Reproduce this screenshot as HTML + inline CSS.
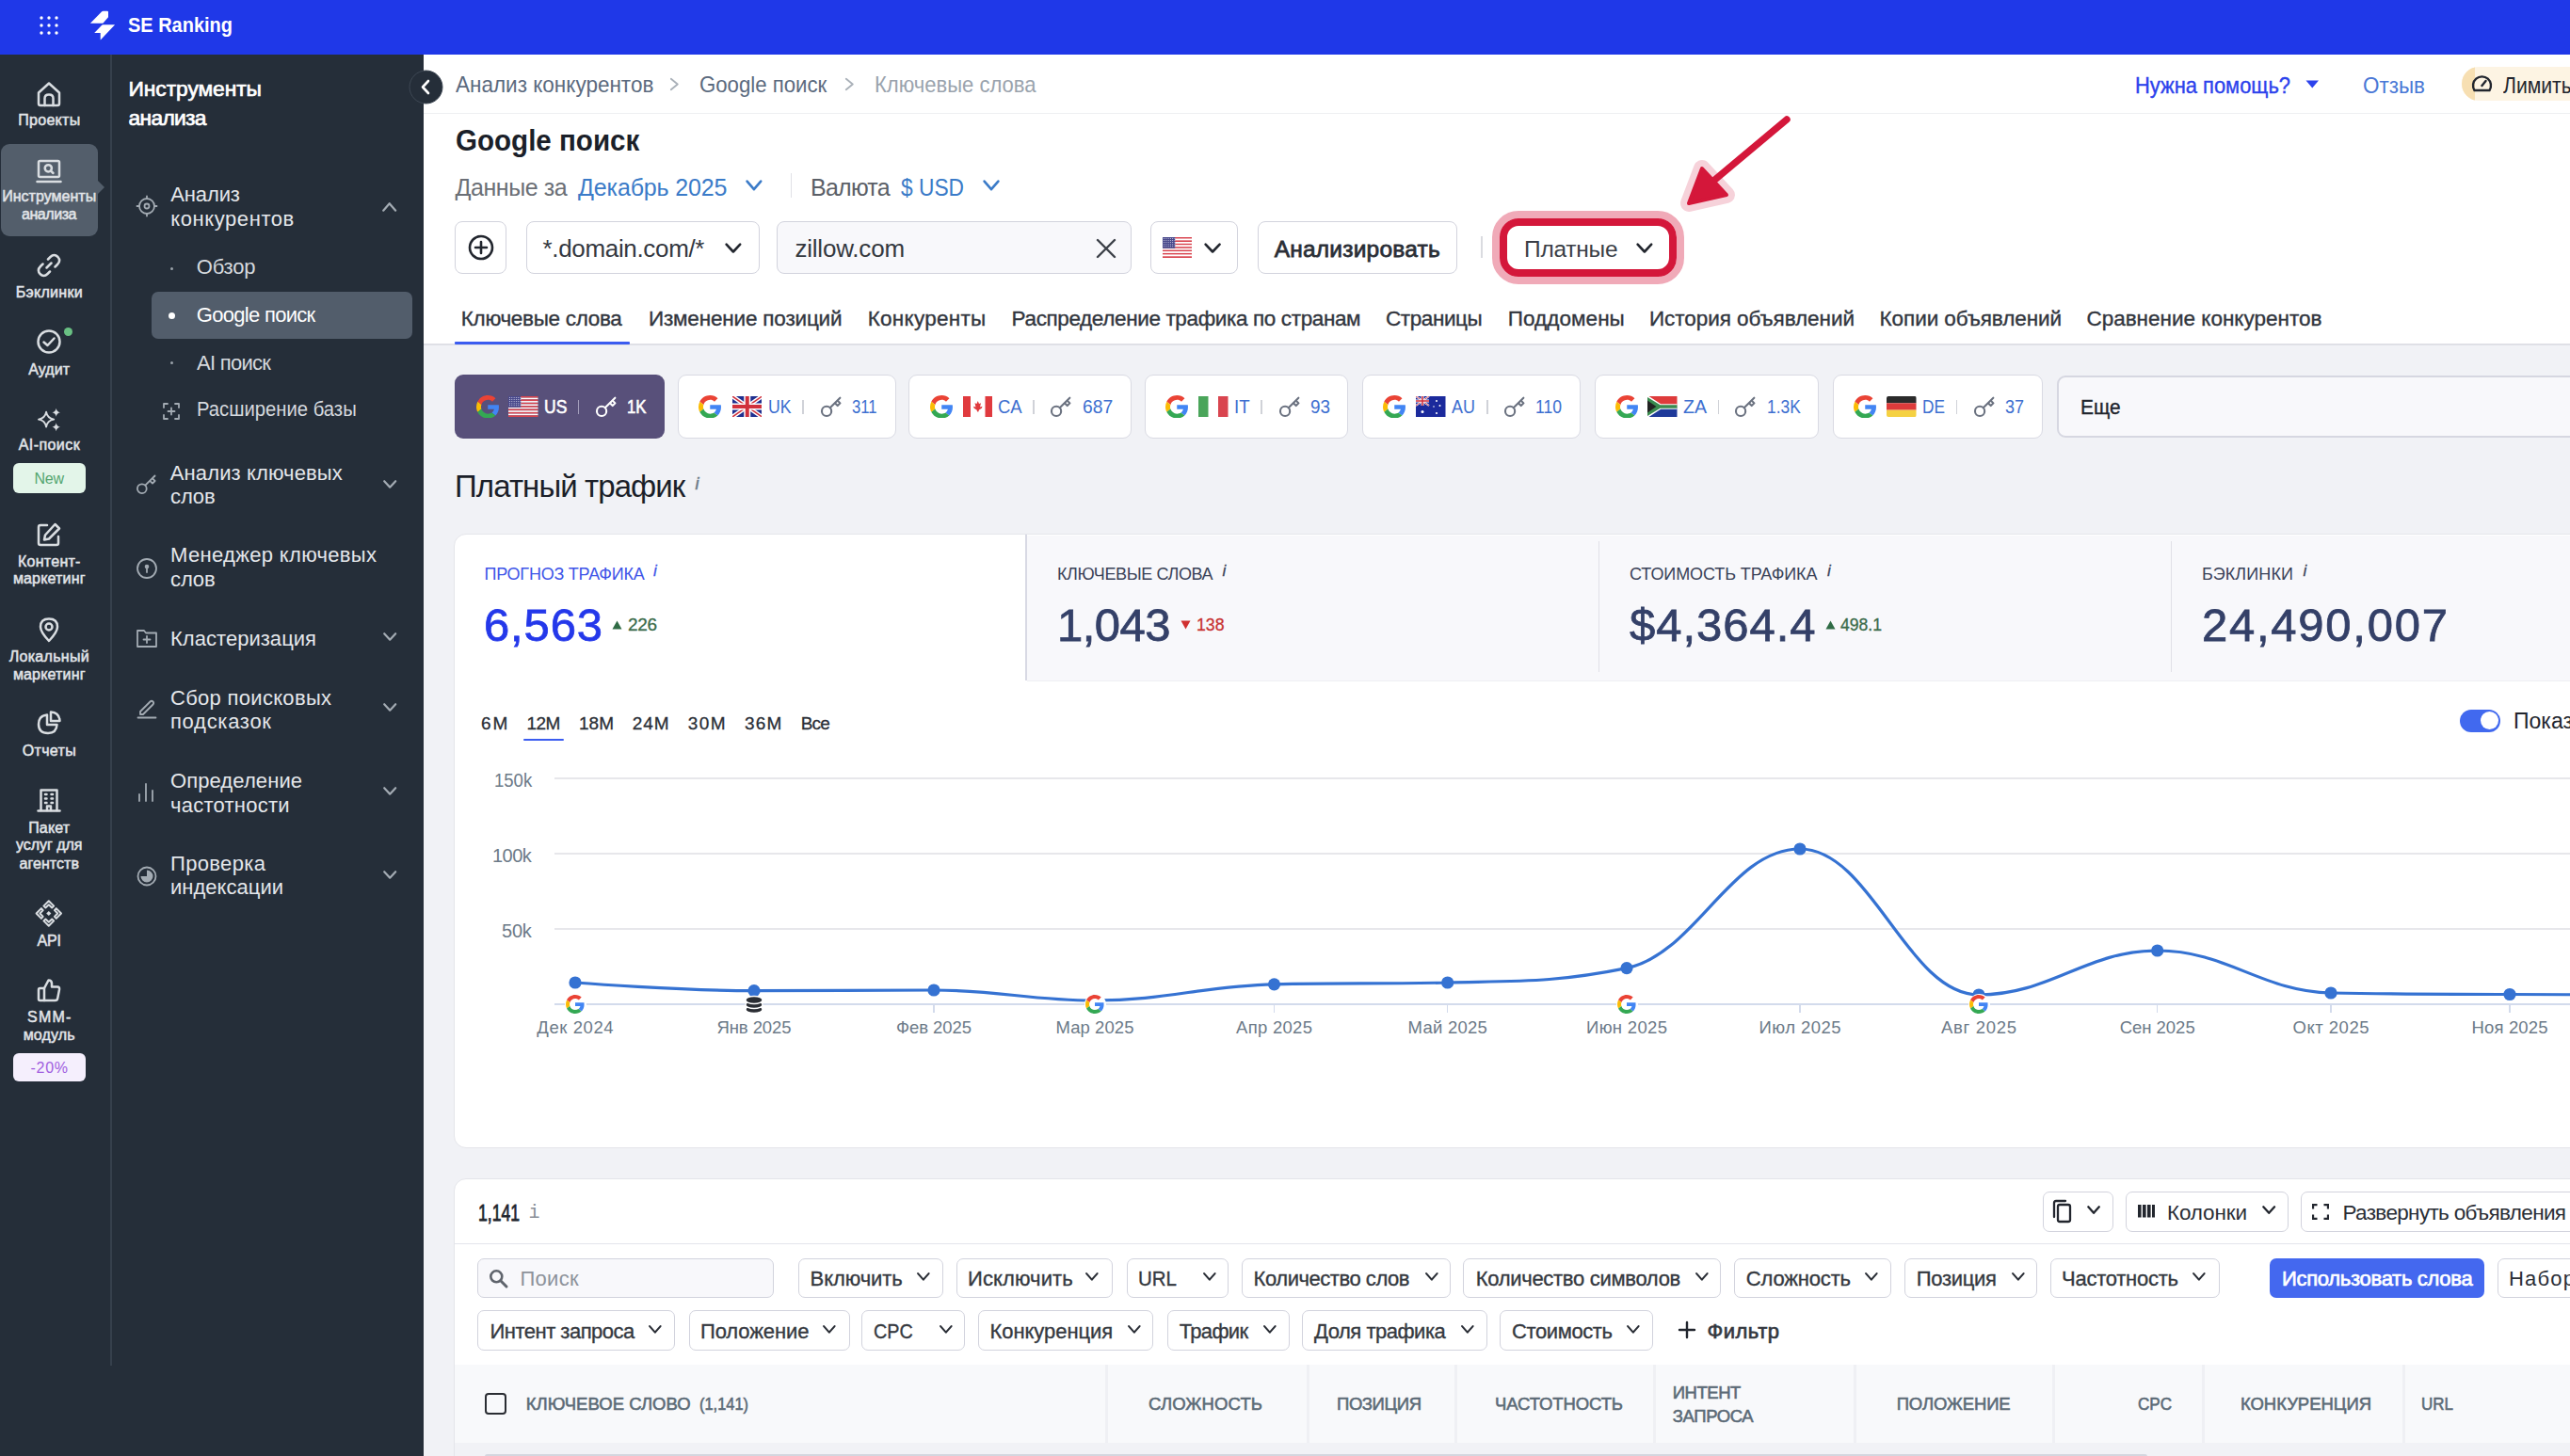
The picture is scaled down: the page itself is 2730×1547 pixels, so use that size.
<!DOCTYPE html>
<html><head><meta charset="utf-8">
<style>
*{box-sizing:border-box;margin:0;padding:0}
html,body{width:2730px;height:1547px;overflow:hidden;background:#f1f2f6;font-family:"Liberation Sans",sans-serif;color:#20242c;position:relative}
.abs{position:absolute}
.t{position:absolute;white-space:pre;line-height:1}

</style></head><body>
<div class="abs" style="left:0.00px;top:0.00px;width:2730.00px;height:58.00px;background:#1f38e8;"></div>
<svg class="abs" style="left:41.00px;top:16.00px;" width="22" height="22" viewBox="0 0 22 22"><circle cx="3" cy="3" r="1.7" fill="#fff"/><circle cx="3" cy="11" r="1.7" fill="#fff"/><circle cx="3" cy="19" r="1.7" fill="#fff"/><circle cx="11" cy="3" r="1.7" fill="#fff"/><circle cx="11" cy="11" r="1.7" fill="#fff"/><circle cx="11" cy="19" r="1.7" fill="#fff"/><circle cx="19" cy="3" r="1.7" fill="#fff"/><circle cx="19" cy="11" r="1.7" fill="#fff"/><circle cx="19" cy="19" r="1.7" fill="#fff"/></svg>
<svg class="abs" style="left:95.00px;top:11.00px;" width="28" height="32" viewBox="0 0 28 32"><path d="M13.2 1.3 Q13.8 0.8 14.6 0.8 H19 Q20 0.8 20 1.8 V7.3 L14.8 13.2 Q14.3 13.8 13.5 13.8 H0.9 Z" fill="#fff"/><path d="M14.2 15.3 H27.1 L11.7 31.4 V24 H5.2 L13.2 15.8 Q13.6 15.3 14.2 15.3 Z" fill="#fff"/></svg>
<div class="t" style="left:136.00px;top:16.25px;font-size:22.5px;color:#ffffff;font-weight:700;transform:scaleX(0.8878);transform-origin:0 0;">SE Ranking</div>
<div class="abs" style="left:0.00px;top:58.00px;width:450.00px;height:1489.00px;background:#252e39;"></div>
<div class="abs" style="left:117.00px;top:58.00px;width:2.00px;height:1393.00px;background:#36404c;"></div>
<div class="abs" style="left:1.00px;top:153.00px;width:103.00px;height:97.50px;background:#535e6b;border-radius:9px;"></div>
<svg class="abs" style="left:103.00px;top:191.00px;" width="9" height="16" viewBox="0 0 9 16"><path d="M0 0 L8 8 L0 16 Z" fill="#535e6b"/></svg>
<svg class="abs" style="left:38.20px;top:85.60px;" width="28" height="28" viewBox="0 0 28 28"><path d="M3 12.5 L14 2.5 L25 12.5 V24 Q25 26 23 26 H5 Q3 26 3 24 Z" fill="none" stroke="#d9dde1" stroke-width="2.5" stroke-linecap="round" stroke-linejoin="round"/><path d="M9.5 26 V18.5 Q9.5 14.5 14 14.5 Q18.5 14.5 18.5 18.5 V26" fill="none" stroke="#d9dde1" stroke-width="2.5" stroke-linecap="round" stroke-linejoin="round"/></svg>
<svg class="abs" style="left:38.20px;top:167.50px;" width="28" height="28" viewBox="0 0 28 28"><rect x="3" y="3" width="22" height="17" rx="1.5" fill="none" stroke="#d9dde1" stroke-width="2.5" stroke-linecap="round" stroke-linejoin="round"/><path d="M1.5 25 H26.5" fill="none" stroke="#d9dde1" stroke-width="2.5" stroke-linecap="round" stroke-linejoin="round"/><circle cx="13.3" cy="10.8" r="3.6" fill="none" stroke="#d9dde1" stroke-width="2.5" stroke-linecap="round" stroke-linejoin="round"/><path d="M16 13.6 L18.5 16" fill="none" stroke="#d9dde1" stroke-width="2.5" stroke-linecap="round" stroke-linejoin="round"/></svg>
<svg class="abs" style="left:38.20px;top:267.50px;" width="28" height="28" viewBox="0 0 28 28"><path d="M11.5 16.5 L16.5 11.5" fill="none" stroke="#d9dde1" stroke-width="2.5" stroke-linecap="round" stroke-linejoin="round"/><path d="M13 7.5 L15.5 5 Q19.5 1 23.5 5 Q27 9 23 13 L20.5 15.5" fill="none" stroke="#d9dde1" stroke-width="2.5" stroke-linecap="round" stroke-linejoin="round"/><path d="M15 20.5 L12.5 23 Q8.5 27 4.5 23 Q1 19 5 15 L7.5 12.5" fill="none" stroke="#d9dde1" stroke-width="2.5" stroke-linecap="round" stroke-linejoin="round"/></svg>
<svg class="abs" style="left:38.20px;top:349.00px;" width="28" height="28" viewBox="0 0 28 28"><circle cx="14" cy="14" r="11.5" fill="none" stroke="#d9dde1" stroke-width="2.5" stroke-linecap="round" stroke-linejoin="round"/><path d="M8.5 14.5 L12.5 18 L19.5 10.5" fill="none" stroke="#d9dde1" stroke-width="2.5" stroke-linecap="round" stroke-linejoin="round"/></svg>
<div class="abs" style="left:67.50px;top:347.50px;width:9.00px;height:9.00px;background:#69c083;border-radius:5px;"></div>
<svg class="abs" style="left:36.00px;top:433.00px;" width="34" height="26" viewBox="0 -4 34 32"><path d="M12.2 1.8 Q13.6 10.2 22.2 11.6 Q13.6 13 12.2 21.4 Q10.8 13 2.2 11.6 Q10.8 10.2 12.2 1.8 Z" fill="none" stroke="#d9dde1" stroke-width="2.3" stroke-linejoin="round"/><path d="M25.2 -3 Q25.9 1.8 30.5 2.5 Q25.9 3.2 25.2 8 Q24.5 3.2 19.9 2.5 Q24.5 1.8 25.2 -3 Z" fill="#d9dde1"/><path d="M25.2 16 Q25.9 20.8 30.5 21.5 Q25.9 22.2 25.2 27 Q24.5 22.2 19.9 21.5 Q24.5 20.8 25.2 16 Z" fill="#d9dde1"/></svg>
<svg class="abs" style="left:38.20px;top:554.00px;" width="28" height="28" viewBox="0 0 28 28"><path d="M12 4 H5 Q3 4 3 6 V23 Q3 25 5 25 H22 Q24 25 24 23 V16" fill="none" stroke="#d9dde1" stroke-width="2.5" stroke-linecap="round" stroke-linejoin="round"/><path d="M20.5 3 L25 7.5 L14 18.5 L9 19.5 L10 14.5 Z" fill="none" stroke="#d9dde1" stroke-width="2.5" stroke-linecap="round" stroke-linejoin="round"/></svg>
<svg class="abs" style="left:38.20px;top:655.00px;" width="28" height="28" viewBox="0 0 28 28"><path d="M14 26 Q5 16.5 5 11 Q5 2.5 14 2.5 Q23 2.5 23 11 Q23 16.5 14 26 Z" fill="none" stroke="#d9dde1" stroke-width="2.5" stroke-linecap="round" stroke-linejoin="round"/><circle cx="14" cy="11" r="3.5" fill="none" stroke="#d9dde1" stroke-width="2.5" stroke-linecap="round" stroke-linejoin="round"/></svg>
<svg class="abs" style="left:38.20px;top:754.00px;" width="28" height="28" viewBox="0 0 28 28"><path d="M12 5.5 Q3 6.5 3 15.5 Q3 25 13 25 Q22 25 22.5 16 H12 Z" fill="none" stroke="#d9dde1" stroke-width="2.5" stroke-linecap="round" stroke-linejoin="round"/><path d="M16 2.5 Q25 3 25.5 12 H16 Z" fill="none" stroke="#d9dde1" stroke-width="2.5" stroke-linecap="round" stroke-linejoin="round"/></svg>
<svg class="abs" style="left:38.20px;top:836.00px;" width="28" height="28" viewBox="0 0 28 28"><path d="M5.5 25 V3.5 H22.5 V25" fill="none" stroke="#d9dde1" stroke-width="2.5" stroke-linecap="round" stroke-linejoin="round"/><path d="M2.5 25.5 H25.5" fill="none" stroke="#d9dde1" stroke-width="2.5" stroke-linecap="round" stroke-linejoin="round"/><path d="M10 8 H11.5 M16.5 8 H18 M10 12.5 H11.5 M16.5 12.5 H18 M10 17 H11.5 M16.5 17 H18" fill="none" stroke="#d9dde1" stroke-width="2.5" stroke-linecap="round" stroke-linejoin="round"/><path d="M12 25 V20.5 H16 V25" fill="none" stroke="#d9dde1" stroke-width="2.5" stroke-linecap="round" stroke-linejoin="round"/></svg>
<svg class="abs" style="left:34.00px;top:952.00px;" width="36" height="36" viewBox="34 952 36 36"><path d="M51.8 957.3 L57.2 962.6 L55.2 964.4 L51.8 961.2 L48.4 964.4 L46.4 962.6 Z M51.8 983.7 L57.2 978.4 L55.2 976.6 L51.8 979.8 L48.4 976.6 L46.4 978.4 Z M38.6 970.5 L43.9 965.1 L45.7 967.1 L42.4 970.5 L45.7 973.9 L43.9 975.9 Z M65.0 970.5 L59.7 965.1 L57.9 967.1 L61.2 970.5 L57.9 973.9 L59.7 975.9 Z" fill="none" stroke="#d9dde1" stroke-width="2" stroke-linejoin="round"/><path d="M51.8 967.9 L54.4 970.5 L51.8 973.1 L49.2 970.5 Z" fill="#d9dde1"/></svg>
<svg class="abs" style="left:38.20px;top:1037.70px;" width="28" height="28" viewBox="0 0 28 28"><path d="M9 12 V25 H4.5 Q3 25 3 23.5 V13.5 Q3 12 4.5 12 Z" fill="none" stroke="#d9dde1" stroke-width="2.5" stroke-linecap="round" stroke-linejoin="round"/><path d="M9 12 L13.5 3.5 Q17 3.5 17 7 V10.5 H23 Q25.5 10.5 25 13.5 L23.2 22.8 Q22.8 25 20.5 25 H9" fill="none" stroke="#d9dde1" stroke-width="2.5" stroke-linecap="round" stroke-linejoin="round"/></svg>
<div class="t" style="left:19.20px;top:119.86px;font-size:16px;color:#e2e5e9;-webkit-text-stroke:0.50px #e2e5e9;letter-spacing:0.299px;">Проекты</div>
<div class="t" style="left:2.20px;top:200.86px;font-size:16px;color:#e2e5e9;-webkit-text-stroke:0.50px #e2e5e9;letter-spacing:0.023px;">Инструменты</div>
<div class="t" style="left:22.95px;top:220.36px;font-size:16px;color:#e2e5e9;-webkit-text-stroke:0.50px #e2e5e9;letter-spacing:-0.440px;">анализа</div>
<div class="t" style="left:16.70px;top:302.86px;font-size:16px;color:#e2e5e9;-webkit-text-stroke:0.50px #e2e5e9;letter-spacing:0.301px;">Бэклинки</div>
<div class="t" style="left:30.20px;top:384.86px;font-size:16px;color:#e2e5e9;-webkit-text-stroke:0.50px #e2e5e9;letter-spacing:0.109px;">Аудит</div>
<div class="t" style="left:19.70px;top:464.86px;font-size:16px;color:#e2e5e9;-webkit-text-stroke:0.50px #e2e5e9;letter-spacing:0.435px;">AI-поиск</div>
<div class="t" style="left:18.95px;top:588.86px;font-size:16px;color:#e2e5e9;-webkit-text-stroke:0.50px #e2e5e9;letter-spacing:0.272px;">Контент-</div>
<div class="t" style="left:13.90px;top:607.36px;font-size:16px;color:#e2e5e9;-webkit-text-stroke:0.50px #e2e5e9;letter-spacing:0.165px;">маркетинг</div>
<div class="t" style="left:9.70px;top:689.86px;font-size:16px;color:#e2e5e9;-webkit-text-stroke:0.50px #e2e5e9;letter-spacing:0.301px;">Локальный</div>
<div class="t" style="left:13.90px;top:708.86px;font-size:16px;color:#e2e5e9;-webkit-text-stroke:0.50px #e2e5e9;letter-spacing:0.165px;">маркетинг</div>
<div class="t" style="left:23.70px;top:789.86px;font-size:16px;color:#e2e5e9;-webkit-text-stroke:0.50px #e2e5e9;letter-spacing:0.338px;">Отчеты</div>
<div class="t" style="left:30.20px;top:871.86px;font-size:16px;color:#e2e5e9;-webkit-text-stroke:0.50px #e2e5e9;letter-spacing:0.180px;">Пакет</div>
<div class="t" style="left:16.95px;top:890.46px;font-size:16px;color:#e2e5e9;-webkit-text-stroke:0.50px #e2e5e9;letter-spacing:-0.035px;">услуг для</div>
<div class="t" style="left:20.50px;top:909.66px;font-size:16px;color:#e2e5e9;-webkit-text-stroke:0.50px #e2e5e9;letter-spacing:0.044px;">агентств</div>
<div class="t" style="left:39.50px;top:991.56px;font-size:16px;color:#e2e5e9;-webkit-text-stroke:0.50px #e2e5e9;letter-spacing:-0.198px;">API</div>
<div class="t" style="left:29.00px;top:1072.86px;font-size:16px;color:#e2e5e9;-webkit-text-stroke:0.50px #e2e5e9;letter-spacing:1.248px;">SMM-</div>
<div class="t" style="left:24.70px;top:1091.86px;font-size:16px;color:#e2e5e9;-webkit-text-stroke:0.50px #e2e5e9;letter-spacing:0.159px;">модуль</div>
<div class="abs" style="left:14.00px;top:492.00px;width:76.60px;height:31.70px;background:#e3f5e9;border-radius:6px;"></div>
<div class="t" style="left:36.55px;top:500.66px;font-size:16px;color:#54a670;letter-spacing:-0.258px;">New</div>
<div class="abs" style="left:14.00px;top:1118.50px;width:76.60px;height:30.90px;background:#f5effd;border-radius:6px;"></div>
<div class="t" style="left:32.55px;top:1126.86px;font-size:16px;color:#a05de0;letter-spacing:0.714px;">-20%</div>
<div class="t" style="left:136.50px;top:82.70px;font-size:22.8px;color:#ffffff;-webkit-text-stroke:0.71px #ffffff;letter-spacing:-0.066px;">Инструменты</div>
<div class="t" style="left:136.50px;top:114.10px;font-size:22.8px;color:#ffffff;-webkit-text-stroke:0.71px #ffffff;letter-spacing:-0.688px;">анализа</div>
<svg class="abs" style="left:144.00px;top:206.50px;" width="24" height="24" viewBox="0 0 24 24"><circle cx="12" cy="12" r="8" fill="none" stroke="#a3abb3" stroke-width="1.8" stroke-linecap="round" stroke-linejoin="round"/><circle cx="12" cy="12" r="2.5" fill="none" stroke="#a3abb3" stroke-width="1.8" stroke-linecap="round" stroke-linejoin="round"/><path d="M12 1.5 V4 M12 20 V22.5 M1.5 12 H4 M20 12 H22.5" fill="none" stroke="#a3abb3" stroke-width="1.8" stroke-linecap="round" stroke-linejoin="round"/></svg>
<div class="t" style="left:181.30px;top:195.78px;font-size:22px;color:#e4e7eb;letter-spacing:-0.136px;">Анализ</div>
<div class="t" style="left:181.30px;top:221.78px;font-size:22px;color:#e4e7eb;letter-spacing:0.573px;">конкурентов</div>
<svg class="abs" style="left:404.80px;top:213.80px;" width="17.4" height="11.9" viewBox="0 0 17.4 11.9"><path d="M2.2 9.7 L8.7 2.2 L15.2 9.7" fill="none" stroke="#a3abb3" stroke-width="2.2" stroke-linecap="round" stroke-linejoin="round"/></svg>
<div class="abs" style="left:180.50px;top:283.50px;width:3.00px;height:3.00px;background:#9aa2aa;border-radius:2px;"></div>
<div class="t" style="left:208.80px;top:272.78px;font-size:22px;color:#d5d9de;letter-spacing:-0.237px;">Обзор</div>
<div class="abs" style="left:161.00px;top:310.40px;width:277.00px;height:49.60px;background:#525d6b;border-radius:7px;"></div>
<div class="abs" style="left:178.50px;top:331.50px;width:7.00px;height:7.00px;background:#ffffff;border-radius:4px;"></div>
<div class="t" style="left:208.80px;top:323.78px;font-size:22px;color:#ffffff;letter-spacing:-0.702px;">Google поиск</div>
<div class="abs" style="left:180.50px;top:383.50px;width:3.00px;height:3.00px;background:#9aa2aa;border-radius:2px;"></div>
<div class="t" style="left:209.00px;top:375.08px;font-size:22px;color:#d5d9de;letter-spacing:-0.710px;">AI поиск</div>
<svg class="abs" style="left:173.00px;top:428.00px;" width="18" height="18" viewBox="0 0 18 18"><path d="M1 5 V1 H5 M13 1 H17 V5 M17 13 V17 H13 M5 17 H1 V13" fill="none" stroke="#a3abb3" stroke-width="1.8" stroke-linecap="round" stroke-linejoin="round"/><path d="M9 5.5 V12.5 M5.5 9 H12.5" fill="none" stroke="#a3abb3" stroke-width="1.8" stroke-linecap="round" stroke-linejoin="round"/></svg>
<div class="t" style="left:209.00px;top:424.48px;font-size:22px;color:#d5d9de;transform:scaleX(0.9205);transform-origin:0 0;">Расширение базы</div>
<svg class="abs" style="left:143.50px;top:502.00px;" width="24" height="24" viewBox="0 0 24 24"><circle cx="6.8" cy="17.2" r="4.9" fill="none" stroke="#a3abb3" stroke-width="1.8"/><path d="M10.3 13.7 L20.5 3.5" fill="none" stroke="#a3abb3" stroke-width="1.8" stroke-linecap="round"/><path d="M15.2 8.8 L18 11.6 L20.6 9 L17.8 6.2" fill="none" stroke="#a3abb3" stroke-width="1.8" stroke-linejoin="round"/></svg>
<div class="t" style="left:180.80px;top:492.48px;font-size:22px;color:#e4e7eb;letter-spacing:0.121px;">Анализ ключевых</div>
<div class="t" style="left:181.00px;top:517.28px;font-size:22px;color:#e4e7eb;letter-spacing:-0.105px;">слов</div>
<svg class="abs" style="left:405.80px;top:508.80px;" width="16.4" height="10.9" viewBox="0 0 16.4 10.9"><path d="M2.2 2.2 L8.2 8.7 L14.2 2.2" fill="none" stroke="#a3abb3" stroke-width="2.2" stroke-linecap="round" stroke-linejoin="round"/></svg>
<svg class="abs" style="left:143.50px;top:591.50px;" width="24" height="24" viewBox="0 0 24 24"><circle cx="12" cy="12" r="10" fill="none" stroke="#a3abb3" stroke-width="1.8" stroke-linecap="round" stroke-linejoin="round"/><circle cx="12" cy="10" r="2.3" fill="#a3abb3"/><path d="M12 11 V16" fill="none" stroke="#a3abb3" stroke-width="1.8" stroke-linecap="round" stroke-linejoin="round"/></svg>
<div class="t" style="left:181.00px;top:578.78px;font-size:22px;color:#e4e7eb;letter-spacing:0.326px;">Менеджер ключевых</div>
<div class="t" style="left:181.00px;top:605.28px;font-size:22px;color:#e4e7eb;letter-spacing:-0.105px;">слов</div>
<svg class="abs" style="left:143.50px;top:666.00px;" width="24" height="24" viewBox="0 0 24 24"><path d="M2 4 H9 L11 6.5 H22 V21 H2 Z" fill="none" stroke="#a3abb3" stroke-width="1.8" stroke-linecap="round" stroke-linejoin="round"/><path d="M12 10 V17 M8.5 13.5 H15.5" fill="none" stroke="#a3abb3" stroke-width="1.8" stroke-linecap="round" stroke-linejoin="round"/></svg>
<div class="t" style="left:181.00px;top:667.78px;font-size:22px;color:#e4e7eb;letter-spacing:0.033px;">Кластеризация</div>
<svg class="abs" style="left:405.80px;top:670.80px;" width="16.4" height="10.9" viewBox="0 0 16.4 10.9"><path d="M2.2 2.2 L8.2 8.7 L14.2 2.2" fill="none" stroke="#a3abb3" stroke-width="2.2" stroke-linecap="round" stroke-linejoin="round"/></svg>
<svg class="abs" style="left:144.00px;top:740.00px;" width="24" height="24" viewBox="0 0 24 24"><path d="M5 16 L15.5 5.5 Q17 4 18.5 5.5 Q20 7 18.5 8.5 L8 19 H5 Z" fill="none" stroke="#a3abb3" stroke-width="1.8" stroke-linecap="round" stroke-linejoin="round"/><path d="M2.5 22.5 H21.5" fill="none" stroke="#a3abb3" stroke-width="1.8" stroke-linecap="round" stroke-linejoin="round"/></svg>
<div class="t" style="left:181.00px;top:731.18px;font-size:22px;color:#e4e7eb;letter-spacing:0.298px;">Сбор поисковых</div>
<div class="t" style="left:181.00px;top:755.78px;font-size:22px;color:#e4e7eb;letter-spacing:0.711px;">подсказок</div>
<svg class="abs" style="left:405.80px;top:745.80px;" width="16.4" height="10.9" viewBox="0 0 16.4 10.9"><path d="M2.2 2.2 L8.2 8.7 L14.2 2.2" fill="none" stroke="#a3abb3" stroke-width="2.2" stroke-linecap="round" stroke-linejoin="round"/></svg>
<svg class="abs" style="left:145.00px;top:829.00px;" width="20" height="24" viewBox="0 0 20 24"><path d="M3 22 V15 M10 22 V4 M17 22 V11" fill="none" stroke="#a3abb3" stroke-width="1.8" stroke-linecap="round" stroke-linejoin="round"/></svg>
<div class="t" style="left:181.00px;top:818.78px;font-size:22px;color:#e4e7eb;letter-spacing:0.089px;">Определение</div>
<div class="t" style="left:181.00px;top:844.58px;font-size:22px;color:#e4e7eb;letter-spacing:0.249px;">частотности</div>
<svg class="abs" style="left:405.80px;top:834.80px;" width="16.4" height="10.9" viewBox="0 0 16.4 10.9"><path d="M2.2 2.2 L8.2 8.7 L14.2 2.2" fill="none" stroke="#a3abb3" stroke-width="2.2" stroke-linecap="round" stroke-linejoin="round"/></svg>
<svg class="abs" style="left:145.00px;top:919.50px;" width="22" height="22" viewBox="0 0 22 22"><circle cx="11" cy="11" r="9.5" fill="none" stroke="#a3abb3" stroke-width="1.8" stroke-linecap="round" stroke-linejoin="round"/><path d="M11 4.5 A6.5 6.5 0 1 1 4.5 11 H11 Z" fill="#a3abb3"/></svg>
<div class="t" style="left:181.00px;top:906.78px;font-size:22px;color:#e4e7eb;letter-spacing:0.350px;">Проверка</div>
<div class="t" style="left:181.00px;top:931.78px;font-size:22px;color:#e4e7eb;letter-spacing:0.023px;">индексации</div>
<svg class="abs" style="left:405.80px;top:923.80px;" width="16.4" height="10.9" viewBox="0 0 16.4 10.9"><path d="M2.2 2.2 L8.2 8.7 L14.2 2.2" fill="none" stroke="#a3abb3" stroke-width="2.2" stroke-linecap="round" stroke-linejoin="round"/></svg>
<div class="abs" style="left:450.00px;top:58.00px;width:2280.00px;height:308.00px;background:#ffffff;"></div>
<div class="abs" style="left:450.00px;top:120.20px;width:2280.00px;height:1.20px;background:#eeeff2;"></div>
<div class="abs" style="left:450.00px;top:364.50px;width:2280.00px;height:2.00px;background:#dfe0e6;"></div>
<svg class="abs" style="left:434.00px;top:74.00px;" width="37" height="37" viewBox="0 0 37 37"><circle cx="18.5" cy="18.5" r="17.5" fill="#252e39" stroke="#3e4854" stroke-width="1"/><path d="M21 12 L15 18.5 L21 25" fill="none" stroke="#fff" stroke-width="2.6" stroke-linecap="round" stroke-linejoin="round"/></svg>
<div class="t" style="left:483.60px;top:78.48px;font-size:24px;color:#5b6a7e;transform:scaleX(0.9378);transform-origin:0 0;">Анализ конкурентов</div>
<svg class="abs" style="left:711.20px;top:82.20px;" width="10.6" height="15.000000000000005" viewBox="0 0 10.6 15.000000000000005"><path d="M1.8 1.8 L8.8 7.500000000000003 L1.8 13.200000000000006" fill="none" stroke="#a9b0b8" stroke-width="1.8" stroke-linecap="round" stroke-linejoin="round"/></svg>
<div class="t" style="left:743.40px;top:78.48px;font-size:24px;color:#5b6a7e;transform:scaleX(0.9247);transform-origin:0 0;">Google поиск</div>
<svg class="abs" style="left:896.60px;top:82.20px;" width="10.6" height="15.000000000000005" viewBox="0 0 10.6 15.000000000000005"><path d="M1.8 1.8 L8.8 7.500000000000003 L1.8 13.200000000000006" fill="none" stroke="#a9b0b8" stroke-width="1.8" stroke-linecap="round" stroke-linejoin="round"/></svg>
<div class="t" style="left:929.00px;top:78.48px;font-size:24px;color:#9aa3ad;transform:scaleX(0.9187);transform-origin:0 0;">Ключевые слова</div>
<div class="t" style="left:2268.00px;top:78.88px;font-size:24px;color:#2c42ec;-webkit-text-stroke:0.38px #2c42ec;transform:scaleX(0.9130);transform-origin:0 0;">Нужна помощь?</div>
<svg class="abs" style="left:2449.00px;top:85.00px;" width="15" height="9" viewBox="0 0 15 9"><path d="M0.5 0.5 H14 L7.25 8.5 Z" fill="#2c42ec"/></svg>
<div class="t" style="left:2510.00px;top:78.88px;font-size:24px;color:#4a78d6;transform:scaleX(0.9339);transform-origin:0 0;">Отзыв</div>
<div class="abs" style="left:2615.00px;top:71.00px;width:145.00px;height:36.00px;background:#fdf4e3;border-radius:18px;"></div>
<svg class="abs" style="left:2615.00px;top:71.00px;" width="14" height="36" viewBox="0 0 14 36"><path d="M18 0 A18 18 0 0 0 18 36 H14 V0 Z" fill="#f7dfb2"/></svg>
<svg class="abs" style="left:2624.00px;top:77.00px;" width="25" height="25" viewBox="0 0 25 25"><path d="M4.5 19 A9.5 9.5 0 1 1 20.5 19 Z" fill="none" stroke="#22262e" stroke-width="2.4" stroke-linejoin="round"/><path d="M12.5 14 L16.5 9" stroke="#22262e" stroke-width="2.4" stroke-linecap="round"/></svg>
<div class="t" style="left:2659.00px;top:78.88px;font-size:24px;color:#22262e;transform:scaleX(0.8819);transform-origin:0 0;">Лимиты</div>
<div class="t" style="left:483.60px;top:134.44px;font-size:31.5px;color:#1b1f29;font-weight:700;transform:scaleX(0.9382);transform-origin:0 0;">Google поиск</div>
<div class="t" style="left:483.60px;top:186.64px;font-size:25px;color:#6b6f76;letter-spacing:-0.455px;">Данные за</div>
<div class="t" style="left:614.00px;top:186.64px;font-size:25px;color:#3b7bc8;letter-spacing:-0.141px;">Декабрь 2025</div>
<svg class="abs" style="left:791.40px;top:190.40px;" width="19.800000000000022" height="13.799999999999994" viewBox="0 0 19.800000000000022 13.799999999999994"><path d="M2.6 2.6 L9.900000000000011 11.199999999999994 L17.200000000000024 2.6" fill="none" stroke="#3b7bc8" stroke-width="2.6" stroke-linecap="round" stroke-linejoin="round"/></svg>
<div class="abs" style="left:839.50px;top:184.40px;width:1.50px;height:25.30px;background:#e0e1e6;"></div>
<div class="t" style="left:861.00px;top:186.64px;font-size:25px;color:#5b5f67;letter-spacing:-0.751px;">Валюта</div>
<div class="t" style="left:957.00px;top:186.64px;font-size:25px;color:#3b7bc8;transform:scaleX(0.9098);transform-origin:0 0;">$ USD</div>
<svg class="abs" style="left:1043.40px;top:190.40px;" width="19.999999999999954" height="13.799999999999994" viewBox="0 0 19.999999999999954 13.799999999999994"><path d="M2.6 2.6 L9.999999999999977 11.199999999999994 L17.399999999999956 2.6" fill="none" stroke="#3b7bc8" stroke-width="2.6" stroke-linecap="round" stroke-linejoin="round"/></svg>
<div class="abs" style="left:483.00px;top:234.60px;width:55.00px;height:56.00px;background:#ffffff;border:1.7px solid #d2d3dd;border-radius:8px;"></div>
<svg class="abs" style="left:497.00px;top:249.00px;" width="28" height="28" viewBox="0 0 28 28"><circle cx="14" cy="14" r="12" fill="none" stroke="#22262e" stroke-width="2.6"/><path d="M14 8 V20 M8 14 H20" stroke="#22262e" stroke-width="2.6" stroke-linecap="round"/></svg>
<div class="abs" style="left:559.00px;top:234.60px;width:247.50px;height:56.00px;background:#ffffff;border:1.7px solid #d2d3dd;border-radius:8px;"></div>
<div class="t" style="left:576.50px;top:250.89px;font-size:26px;color:#34383f;letter-spacing:-0.332px;">*.domain.com/*</div>
<svg class="abs" style="left:769.40px;top:256.80px;" width="19.800000000000022" height="13.100000000000033" viewBox="0 0 19.800000000000022 13.100000000000033"><path d="M2.6 2.6 L9.900000000000011 10.500000000000034 L17.200000000000024 2.6" fill="none" stroke="#22262e" stroke-width="2.6" stroke-linecap="round" stroke-linejoin="round"/></svg>
<div class="abs" style="left:825.40px;top:234.60px;width:377.10px;height:56.00px;background:#f8f8fb;border:1.7px solid #d2d3dd;border-radius:8px;"></div>
<div class="t" style="left:844.40px;top:250.89px;font-size:26px;color:#34383f;letter-spacing:-0.198px;">zillow.com</div>
<svg class="abs" style="left:1163.00px;top:251.50px;" width="24" height="24" viewBox="0 0 24 24"><path d="M3 3 L21 21 M21 3 L3 21" stroke="#3c4048" stroke-width="2.4" stroke-linecap="round"/></svg>
<div class="abs" style="left:1222.00px;top:234.60px;width:93.00px;height:56.00px;background:#ffffff;border:1.7px solid #d2d3dd;border-radius:8px;"></div>
<svg class="abs" style="left:1234.50px;top:251.70px;" width="31.5" height="22" viewBox="0 0 31.5 22"><rect x="0" y="0.000" width="31.5" height="1.692" fill="#d9444f"/><rect x="0" y="1.692" width="31.5" height="1.692" fill="#ffffff"/><rect x="0" y="3.385" width="31.5" height="1.692" fill="#d9444f"/><rect x="0" y="5.077" width="31.5" height="1.692" fill="#ffffff"/><rect x="0" y="6.769" width="31.5" height="1.692" fill="#d9444f"/><rect x="0" y="8.462" width="31.5" height="1.692" fill="#ffffff"/><rect x="0" y="10.154" width="31.5" height="1.692" fill="#d9444f"/><rect x="0" y="11.846" width="31.5" height="1.692" fill="#ffffff"/><rect x="0" y="13.538" width="31.5" height="1.692" fill="#d9444f"/><rect x="0" y="15.231" width="31.5" height="1.692" fill="#ffffff"/><rect x="0" y="16.923" width="31.5" height="1.692" fill="#d9444f"/><rect x="0" y="18.615" width="31.5" height="1.692" fill="#ffffff"/><rect x="0" y="20.308" width="31.5" height="1.692" fill="#d9444f"/><rect x="0" y="0" width="13.23" height="11.85" fill="#4a4a8c"/><circle cx="1.50" cy="1.40" r="0.5" fill="#dde"/><circle cx="1.50" cy="3.50" r="0.5" fill="#dde"/><circle cx="1.50" cy="5.60" r="0.5" fill="#dde"/><circle cx="1.50" cy="7.70" r="0.5" fill="#dde"/><circle cx="1.50" cy="9.80" r="0.5" fill="#dde"/><circle cx="3.80" cy="1.40" r="0.5" fill="#dde"/><circle cx="3.80" cy="3.50" r="0.5" fill="#dde"/><circle cx="3.80" cy="5.60" r="0.5" fill="#dde"/><circle cx="3.80" cy="7.70" r="0.5" fill="#dde"/><circle cx="3.80" cy="9.80" r="0.5" fill="#dde"/><circle cx="6.10" cy="1.40" r="0.5" fill="#dde"/><circle cx="6.10" cy="3.50" r="0.5" fill="#dde"/><circle cx="6.10" cy="5.60" r="0.5" fill="#dde"/><circle cx="6.10" cy="7.70" r="0.5" fill="#dde"/><circle cx="6.10" cy="9.80" r="0.5" fill="#dde"/><circle cx="8.40" cy="1.40" r="0.5" fill="#dde"/><circle cx="8.40" cy="3.50" r="0.5" fill="#dde"/><circle cx="8.40" cy="5.60" r="0.5" fill="#dde"/><circle cx="8.40" cy="7.70" r="0.5" fill="#dde"/><circle cx="8.40" cy="9.80" r="0.5" fill="#dde"/><circle cx="10.70" cy="1.40" r="0.5" fill="#dde"/><circle cx="10.70" cy="3.50" r="0.5" fill="#dde"/><circle cx="10.70" cy="5.60" r="0.5" fill="#dde"/><circle cx="10.70" cy="7.70" r="0.5" fill="#dde"/><circle cx="10.70" cy="9.80" r="0.5" fill="#dde"/><circle cx="13.00" cy="1.40" r="0.5" fill="#dde"/><circle cx="13.00" cy="3.50" r="0.5" fill="#dde"/><circle cx="13.00" cy="5.60" r="0.5" fill="#dde"/><circle cx="13.00" cy="7.70" r="0.5" fill="#dde"/><circle cx="13.00" cy="9.80" r="0.5" fill="#dde"/></svg>
<svg class="abs" style="left:1277.90px;top:256.80px;" width="20.2" height="13.100000000000033" viewBox="0 0 20.2 13.100000000000033"><path d="M2.6 2.6 L10.1 10.500000000000034 L17.6 2.6" fill="none" stroke="#22262e" stroke-width="2.6" stroke-linecap="round" stroke-linejoin="round"/></svg>
<div class="abs" style="left:1335.60px;top:234.60px;width:212.00px;height:56.00px;background:#ffffff;border:1.7px solid #d2d3dd;border-radius:8px;"></div>
<div class="t" style="left:1353.70px;top:252.66px;font-size:24.5px;color:#2a2e36;-webkit-text-stroke:0.76px #2a2e36;letter-spacing:0.211px;">Анализировать</div>
<div class="abs" style="left:1573.30px;top:251.00px;width:1.70px;height:23.00px;background:#dadbe0;"></div>
<div class="t" style="left:1619.00px;top:252.66px;font-size:24.5px;color:#3a3e46;letter-spacing:-0.231px;">Платные</div>
<svg class="abs" style="left:1737.40px;top:256.80px;" width="19.79999999999991" height="13.100000000000033" viewBox="0 0 19.79999999999991 13.100000000000033"><path d="M2.6 2.6 L9.899999999999954 10.500000000000034 L17.19999999999991 2.6" fill="none" stroke="#22262e" stroke-width="2.6" stroke-linecap="round" stroke-linejoin="round"/></svg>
<div class="t" style="left:489.80px;top:327.75px;font-size:22.5px;color:#32363e;-webkit-text-stroke:0.36px #32363e;letter-spacing:-0.316px;">Ключевые слова</div>
<div class="t" style="left:688.90px;top:327.75px;font-size:22.5px;color:#32363e;-webkit-text-stroke:0.36px #32363e;letter-spacing:-0.177px;">Изменение позиций</div>
<div class="t" style="left:921.70px;top:327.75px;font-size:22.5px;color:#32363e;-webkit-text-stroke:0.36px #32363e;letter-spacing:0.269px;">Конкуренты</div>
<div class="t" style="left:1074.60px;top:327.75px;font-size:22.5px;color:#32363e;-webkit-text-stroke:0.36px #32363e;letter-spacing:-0.371px;">Распределение трафика по странам</div>
<div class="t" style="left:1472.00px;top:327.75px;font-size:22.5px;color:#32363e;-webkit-text-stroke:0.36px #32363e;letter-spacing:-0.420px;">Страницы</div>
<div class="t" style="left:1601.80px;top:327.75px;font-size:22.5px;color:#32363e;-webkit-text-stroke:0.36px #32363e;letter-spacing:0.057px;">Поддомены</div>
<div class="t" style="left:1752.00px;top:327.75px;font-size:22.5px;color:#32363e;-webkit-text-stroke:0.36px #32363e;letter-spacing:-0.062px;">История объявлений</div>
<div class="t" style="left:1996.60px;top:327.75px;font-size:22.5px;color:#32363e;-webkit-text-stroke:0.36px #32363e;letter-spacing:-0.082px;">Копии объявлений</div>
<div class="t" style="left:2216.40px;top:327.75px;font-size:22.5px;color:#32363e;-webkit-text-stroke:0.36px #32363e;">Сравнение конкурентов</div>
<div class="abs" style="left:483.00px;top:363.00px;width:186.00px;height:3.00px;background:#3b5cf0;border-radius:1px;"></div>
<div class="abs" style="left:482.70px;top:397.70px;width:223.80px;height:68.30px;background:#58507a;border-radius:9px;"></div>
<svg class="abs" style="left:505.80px;top:419.50px;" width="24.5" height="24.5" viewBox="0 0 48 48"><path fill="#EA4335" d="M24 9.5c3.54 0 6.71 1.22 9.21 3.6l6.85-6.85C35.9 2.38 30.47 0 24 0 14.62 0 6.51 5.38 2.56 13.22l7.98 6.19C12.43 13.72 17.74 9.5 24 9.5z"/><path fill="#4285F4" d="M46.98 24.55c0-1.57-.15-3.09-.38-4.55H24v9.02h12.94c-.58 2.96-2.26 5.48-4.78 7.18l7.73 6c4.51-4.18 7.09-10.36 7.09-17.65z"/><path fill="#FBBC05" d="M10.53 28.59c-.48-1.45-.76-2.99-.76-4.59s.27-3.14.76-4.59l-7.98-6.19C.92 16.46 0 20.12 0 24c0 3.88.92 7.54 2.56 10.78l7.97-6.19z"/><path fill="#34A853" d="M24 48c6.48 0 11.93-2.13 15.89-5.81l-7.73-6c-2.15 1.45-4.92 2.3-8.16 2.3-6.26 0-11.57-4.22-13.47-9.91l-7.98 6.19C6.51 42.62 14.62 48 24 48z"/></svg>
<svg class="abs" style="left:540.00px;top:421.00px;" width="31.5" height="22" viewBox="0 0 31.5 22"><rect x="0" y="0.000" width="31.5" height="1.692" fill="#d9444f"/><rect x="0" y="1.692" width="31.5" height="1.692" fill="#ffffff"/><rect x="0" y="3.385" width="31.5" height="1.692" fill="#d9444f"/><rect x="0" y="5.077" width="31.5" height="1.692" fill="#ffffff"/><rect x="0" y="6.769" width="31.5" height="1.692" fill="#d9444f"/><rect x="0" y="8.462" width="31.5" height="1.692" fill="#ffffff"/><rect x="0" y="10.154" width="31.5" height="1.692" fill="#d9444f"/><rect x="0" y="11.846" width="31.5" height="1.692" fill="#ffffff"/><rect x="0" y="13.538" width="31.5" height="1.692" fill="#d9444f"/><rect x="0" y="15.231" width="31.5" height="1.692" fill="#ffffff"/><rect x="0" y="16.923" width="31.5" height="1.692" fill="#d9444f"/><rect x="0" y="18.615" width="31.5" height="1.692" fill="#ffffff"/><rect x="0" y="20.308" width="31.5" height="1.692" fill="#d9444f"/><rect x="0" y="0" width="13.23" height="11.85" fill="#4a4a8c"/><circle cx="1.50" cy="1.40" r="0.5" fill="#dde"/><circle cx="1.50" cy="3.50" r="0.5" fill="#dde"/><circle cx="1.50" cy="5.60" r="0.5" fill="#dde"/><circle cx="1.50" cy="7.70" r="0.5" fill="#dde"/><circle cx="1.50" cy="9.80" r="0.5" fill="#dde"/><circle cx="3.80" cy="1.40" r="0.5" fill="#dde"/><circle cx="3.80" cy="3.50" r="0.5" fill="#dde"/><circle cx="3.80" cy="5.60" r="0.5" fill="#dde"/><circle cx="3.80" cy="7.70" r="0.5" fill="#dde"/><circle cx="3.80" cy="9.80" r="0.5" fill="#dde"/><circle cx="6.10" cy="1.40" r="0.5" fill="#dde"/><circle cx="6.10" cy="3.50" r="0.5" fill="#dde"/><circle cx="6.10" cy="5.60" r="0.5" fill="#dde"/><circle cx="6.10" cy="7.70" r="0.5" fill="#dde"/><circle cx="6.10" cy="9.80" r="0.5" fill="#dde"/><circle cx="8.40" cy="1.40" r="0.5" fill="#dde"/><circle cx="8.40" cy="3.50" r="0.5" fill="#dde"/><circle cx="8.40" cy="5.60" r="0.5" fill="#dde"/><circle cx="8.40" cy="7.70" r="0.5" fill="#dde"/><circle cx="8.40" cy="9.80" r="0.5" fill="#dde"/><circle cx="10.70" cy="1.40" r="0.5" fill="#dde"/><circle cx="10.70" cy="3.50" r="0.5" fill="#dde"/><circle cx="10.70" cy="5.60" r="0.5" fill="#dde"/><circle cx="10.70" cy="7.70" r="0.5" fill="#dde"/><circle cx="10.70" cy="9.80" r="0.5" fill="#dde"/><circle cx="13.00" cy="1.40" r="0.5" fill="#dde"/><circle cx="13.00" cy="3.50" r="0.5" fill="#dde"/><circle cx="13.00" cy="5.60" r="0.5" fill="#dde"/><circle cx="13.00" cy="7.70" r="0.5" fill="#dde"/><circle cx="13.00" cy="9.80" r="0.5" fill="#dde"/></svg>
<div class="t" style="left:578.30px;top:420.72px;font-size:21px;color:#ffffff;-webkit-text-stroke:0.65px #ffffff;transform:scaleX(0.8325);transform-origin:0 0;">US</div>
<div class="abs" style="left:613.95px;top:425.00px;width:1.50px;height:14.50px;background:#a49fbc;"></div>
<svg class="abs" style="left:631.80px;top:419.00px;" width="25" height="25" viewBox="0 0 24 24"><circle cx="6.8" cy="17.2" r="4.9" fill="none" stroke="#ffffff" stroke-width="2"/><path d="M10.3 13.7 L20.5 3.5" fill="none" stroke="#ffffff" stroke-width="2" stroke-linecap="round"/><path d="M15.2 8.8 L18 11.6 L20.6 9 L17.8 6.2" fill="none" stroke="#ffffff" stroke-width="2" stroke-linejoin="round"/></svg>
<div class="t" style="left:666.00px;top:420.72px;font-size:21px;color:#ffffff;-webkit-text-stroke:0.65px #ffffff;transform:scaleX(0.8019);transform-origin:0 0;">1K</div>
<div class="abs" style="left:720.00px;top:397.70px;width:232.00px;height:68.30px;background:#ffffff;border:1.5px solid #d9dae3;border-radius:9px;"></div>
<svg class="abs" style="left:742.30px;top:419.50px;" width="24.5" height="24.5" viewBox="0 0 48 48"><path fill="#EA4335" d="M24 9.5c3.54 0 6.71 1.22 9.21 3.6l6.85-6.85C35.9 2.38 30.47 0 24 0 14.62 0 6.51 5.38 2.56 13.22l7.98 6.19C12.43 13.72 17.74 9.5 24 9.5z"/><path fill="#4285F4" d="M46.98 24.55c0-1.57-.15-3.09-.38-4.55H24v9.02h12.94c-.58 2.96-2.26 5.48-4.78 7.18l7.73 6c4.51-4.18 7.09-10.36 7.09-17.65z"/><path fill="#FBBC05" d="M10.53 28.59c-.48-1.45-.76-2.99-.76-4.59s.27-3.14.76-4.59l-7.98-6.19C.92 16.46 0 20.12 0 24c0 3.88.92 7.54 2.56 10.78l7.97-6.19z"/><path fill="#34A853" d="M24 48c6.48 0 11.93-2.13 15.89-5.81l-7.73-6c-2.15 1.45-4.92 2.3-8.16 2.3-6.26 0-11.57-4.22-13.47-9.91l-7.98 6.19C6.51 42.62 14.62 48 24 48z"/></svg>
<svg class="abs" style="left:777.50px;top:421.00px;" width="31.5" height="22" viewBox="0 0 31.5 22"><rect width="31.5" height="22" fill="#1f2f8f"/><path d="M0 0 L31.5 22 M31.5 0 L0 22" stroke="#fff" stroke-width="4.5"/><path d="M0 0 L31.5 22 M31.5 0 L0 22" stroke="#d0313c" stroke-width="1.5"/><path d="M15.75 0 V22 M0 11.0 H31.5" stroke="#fff" stroke-width="7"/><path d="M15.75 0 V22 M0 11.0 H31.5" stroke="#d0313c" stroke-width="4"/></svg>
<div class="t" style="left:815.80px;top:420.72px;font-size:21px;color:#3d6fd0;transform:scaleX(0.8428);transform-origin:0 0;">UK</div>
<div class="abs" style="left:852.25px;top:425.00px;width:1.50px;height:14.50px;background:#d0d2d8;"></div>
<svg class="abs" style="left:871.40px;top:419.00px;" width="25" height="25" viewBox="0 0 24 24"><circle cx="6.8" cy="17.2" r="4.9" fill="none" stroke="#6b7280" stroke-width="2"/><path d="M10.3 13.7 L20.5 3.5" fill="none" stroke="#6b7280" stroke-width="2" stroke-linecap="round"/><path d="M15.2 8.8 L18 11.6 L20.6 9 L17.8 6.2" fill="none" stroke="#6b7280" stroke-width="2" stroke-linejoin="round"/></svg>
<div class="t" style="left:905.00px;top:420.72px;font-size:21px;color:#3d6fd0;transform:scaleX(0.7944);transform-origin:0 0;">311</div>
<div class="abs" style="left:965.00px;top:397.70px;width:236.50px;height:68.30px;background:#ffffff;border:1.5px solid #d9dae3;border-radius:9px;"></div>
<svg class="abs" style="left:988.00px;top:419.50px;" width="24.5" height="24.5" viewBox="0 0 48 48"><path fill="#EA4335" d="M24 9.5c3.54 0 6.71 1.22 9.21 3.6l6.85-6.85C35.9 2.38 30.47 0 24 0 14.62 0 6.51 5.38 2.56 13.22l7.98 6.19C12.43 13.72 17.74 9.5 24 9.5z"/><path fill="#4285F4" d="M46.98 24.55c0-1.57-.15-3.09-.38-4.55H24v9.02h12.94c-.58 2.96-2.26 5.48-4.78 7.18l7.73 6c4.51-4.18 7.09-10.36 7.09-17.65z"/><path fill="#FBBC05" d="M10.53 28.59c-.48-1.45-.76-2.99-.76-4.59s.27-3.14.76-4.59l-7.98-6.19C.92 16.46 0 20.12 0 24c0 3.88.92 7.54 2.56 10.78l7.97-6.19z"/><path fill="#34A853" d="M24 48c6.48 0 11.93-2.13 15.89-5.81l-7.73-6c-2.15 1.45-4.92 2.3-8.16 2.3-6.26 0-11.57-4.22-13.47-9.91l-7.98 6.19C6.51 42.62 14.62 48 24 48z"/></svg>
<svg class="abs" style="left:1022.50px;top:421.00px;" width="31.5" height="22" viewBox="0 0 31.5 22"><rect width="31.5" height="22" fill="#fff"/><rect width="8" height="22" fill="#e03a3e"/><rect x="23.5" width="8" height="22" fill="#e03a3e"/><path d="M15.75 5 L17 8 L19 7.2 L18 11.5 L20.5 10.8 L19.8 12.8 L17 14.5 L16.3 16.5 H15.2 L14.5 14.5 L11.7 12.8 L11 10.8 L13.5 11.5 L12.5 7.2 L14.5 8 Z" fill="#e03a3e"/></svg>
<div class="t" style="left:1060.00px;top:420.72px;font-size:21px;color:#3d6fd0;transform:scaleX(0.8805);transform-origin:0 0;">CA</div>
<div class="abs" style="left:1097.25px;top:425.00px;width:1.50px;height:14.50px;background:#d0d2d8;"></div>
<svg class="abs" style="left:1115.00px;top:419.00px;" width="25" height="25" viewBox="0 0 24 24"><circle cx="6.8" cy="17.2" r="4.9" fill="none" stroke="#6b7280" stroke-width="2"/><path d="M10.3 13.7 L20.5 3.5" fill="none" stroke="#6b7280" stroke-width="2" stroke-linecap="round"/><path d="M15.2 8.8 L18 11.6 L20.6 9 L17.8 6.2" fill="none" stroke="#6b7280" stroke-width="2" stroke-linejoin="round"/></svg>
<div class="t" style="left:1149.50px;top:420.72px;font-size:21px;color:#3d6fd0;transform:scaleX(0.9159);transform-origin:0 0;">687</div>
<div class="abs" style="left:1215.60px;top:397.70px;width:216.40px;height:68.30px;background:#ffffff;border:1.5px solid #d9dae3;border-radius:9px;"></div>
<svg class="abs" style="left:1238.00px;top:419.50px;" width="24.5" height="24.5" viewBox="0 0 48 48"><path fill="#EA4335" d="M24 9.5c3.54 0 6.71 1.22 9.21 3.6l6.85-6.85C35.9 2.38 30.47 0 24 0 14.62 0 6.51 5.38 2.56 13.22l7.98 6.19C12.43 13.72 17.74 9.5 24 9.5z"/><path fill="#4285F4" d="M46.98 24.55c0-1.57-.15-3.09-.38-4.55H24v9.02h12.94c-.58 2.96-2.26 5.48-4.78 7.18l7.73 6c4.51-4.18 7.09-10.36 7.09-17.65z"/><path fill="#FBBC05" d="M10.53 28.59c-.48-1.45-.76-2.99-.76-4.59s.27-3.14.76-4.59l-7.98-6.19C.92 16.46 0 20.12 0 24c0 3.88.92 7.54 2.56 10.78l7.97-6.19z"/><path fill="#34A853" d="M24 48c6.48 0 11.93-2.13 15.89-5.81l-7.73-6c-2.15 1.45-4.92 2.3-8.16 2.3-6.26 0-11.57-4.22-13.47-9.91l-7.98 6.19C6.51 42.62 14.62 48 24 48z"/></svg>
<svg class="abs" style="left:1273.00px;top:421.00px;" width="31.5" height="22" viewBox="0 0 31.5 22"><rect width="31.5" height="22" fill="#fff"/><rect width="10.5" height="22" fill="#4aa55a"/><rect x="21" width="10.5" height="22" fill="#d9454f"/></svg>
<div class="t" style="left:1311.00px;top:420.72px;font-size:21px;color:#3d6fd0;transform:scaleX(0.8890);transform-origin:0 0;">IT</div>
<div class="abs" style="left:1339.25px;top:425.00px;width:1.50px;height:14.50px;background:#d0d2d8;"></div>
<svg class="abs" style="left:1357.80px;top:419.00px;" width="25" height="25" viewBox="0 0 24 24"><circle cx="6.8" cy="17.2" r="4.9" fill="none" stroke="#6b7280" stroke-width="2"/><path d="M10.3 13.7 L20.5 3.5" fill="none" stroke="#6b7280" stroke-width="2" stroke-linecap="round"/><path d="M15.2 8.8 L18 11.6 L20.6 9 L17.8 6.2" fill="none" stroke="#6b7280" stroke-width="2" stroke-linejoin="round"/></svg>
<div class="t" style="left:1392.00px;top:420.72px;font-size:21px;color:#3d6fd0;transform:scaleX(0.8990);transform-origin:0 0;">93</div>
<div class="abs" style="left:1446.50px;top:397.70px;width:232.50px;height:68.30px;background:#ffffff;border:1.5px solid #d9dae3;border-radius:9px;"></div>
<svg class="abs" style="left:1469.30px;top:419.50px;" width="24.5" height="24.5" viewBox="0 0 48 48"><path fill="#EA4335" d="M24 9.5c3.54 0 6.71 1.22 9.21 3.6l6.85-6.85C35.9 2.38 30.47 0 24 0 14.62 0 6.51 5.38 2.56 13.22l7.98 6.19C12.43 13.72 17.74 9.5 24 9.5z"/><path fill="#4285F4" d="M46.98 24.55c0-1.57-.15-3.09-.38-4.55H24v9.02h12.94c-.58 2.96-2.26 5.48-4.78 7.18l7.73 6c4.51-4.18 7.09-10.36 7.09-17.65z"/><path fill="#FBBC05" d="M10.53 28.59c-.48-1.45-.76-2.99-.76-4.59s.27-3.14.76-4.59l-7.98-6.19C.92 16.46 0 20.12 0 24c0 3.88.92 7.54 2.56 10.78l7.97-6.19z"/><path fill="#34A853" d="M24 48c6.48 0 11.93-2.13 15.89-5.81l-7.73-6c-2.15 1.45-4.92 2.3-8.16 2.3-6.26 0-11.57-4.22-13.47-9.91l-7.98 6.19C6.51 42.62 14.62 48 24 48z"/></svg>
<svg class="abs" style="left:1504.00px;top:421.00px;" width="31.5" height="22" viewBox="0 0 31.5 22"><rect width="31.5" height="22" fill="#1b2a9c"/><path d="M0 0 L14 10 M14 0 L0 10" stroke="#fff" stroke-width="2"/><path d="M0 0 L14 10 M14 0 L0 10" stroke="#d0313c" stroke-width="0.8"/><path d="M7 0 V10 M0 5 H14" stroke="#fff" stroke-width="3"/><path d="M7 0 V10 M0 5 H14" stroke="#d0313c" stroke-width="1.6"/><circle cx="7" cy="16.5" r="1.5" fill="#fff"/><circle cx="22" cy="5" r="1" fill="#fff"/><circle cx="25.5" cy="10" r="1" fill="#fff"/><circle cx="22" cy="18" r="1.1" fill="#fff"/><circle cx="19" cy="11" r="0.8" fill="#fff"/></svg>
<div class="t" style="left:1542.40px;top:420.72px;font-size:21px;color:#3d6fd0;transform:scaleX(0.8531);transform-origin:0 0;">AU</div>
<div class="abs" style="left:1579.05px;top:425.00px;width:1.50px;height:14.50px;background:#d0d2d8;"></div>
<svg class="abs" style="left:1596.50px;top:419.00px;" width="25" height="25" viewBox="0 0 24 24"><circle cx="6.8" cy="17.2" r="4.9" fill="none" stroke="#6b7280" stroke-width="2"/><path d="M10.3 13.7 L20.5 3.5" fill="none" stroke="#6b7280" stroke-width="2" stroke-linecap="round"/><path d="M15.2 8.8 L18 11.6 L20.6 9 L17.8 6.2" fill="none" stroke="#6b7280" stroke-width="2" stroke-linejoin="round"/></svg>
<div class="t" style="left:1631.00px;top:420.72px;font-size:21px;color:#3d6fd0;transform:scaleX(0.8362);transform-origin:0 0;">110</div>
<div class="abs" style="left:1693.70px;top:397.70px;width:238.30px;height:68.30px;background:#ffffff;border:1.5px solid #d9dae3;border-radius:9px;"></div>
<svg class="abs" style="left:1716.00px;top:419.50px;" width="24.5" height="24.5" viewBox="0 0 48 48"><path fill="#EA4335" d="M24 9.5c3.54 0 6.71 1.22 9.21 3.6l6.85-6.85C35.9 2.38 30.47 0 24 0 14.62 0 6.51 5.38 2.56 13.22l7.98 6.19C12.43 13.72 17.74 9.5 24 9.5z"/><path fill="#4285F4" d="M46.98 24.55c0-1.57-.15-3.09-.38-4.55H24v9.02h12.94c-.58 2.96-2.26 5.48-4.78 7.18l7.73 6c4.51-4.18 7.09-10.36 7.09-17.65z"/><path fill="#FBBC05" d="M10.53 28.59c-.48-1.45-.76-2.99-.76-4.59s.27-3.14.76-4.59l-7.98-6.19C.92 16.46 0 20.12 0 24c0 3.88.92 7.54 2.56 10.78l7.97-6.19z"/><path fill="#34A853" d="M24 48c6.48 0 11.93-2.13 15.89-5.81l-7.73-6c-2.15 1.45-4.92 2.3-8.16 2.3-6.26 0-11.57-4.22-13.47-9.91l-7.98 6.19C6.51 42.62 14.62 48 24 48z"/></svg>
<svg class="abs" style="left:1750.00px;top:421.00px;" width="31.5" height="22" viewBox="0 0 31.5 22"><rect width="31.5" height="11.0" fill="#de3b3b"/><rect y="11.0" width="31.5" height="11.0" fill="#1f3a9a"/><path d="M0 0 L13.229999999999999 11.0 L0 22 Z" fill="#fff"/><path d="M0 3 L11.34 11.0 L0 19 Z" fill="#f2c200"/><path d="M0 -1 L14.175 8.2 H31.5 V13.8 H14.175 L0 23 Z" fill="#fff"/><path d="M0 1 L13.545 9.3 H31.5 V12.7 H13.545 L0 21 Z" fill="#3a8a4e"/><path d="M0 4.5 L9.45 11.0 L0 17.5 Z" fill="#222"/></svg>
<div class="t" style="left:1788.00px;top:420.72px;font-size:21px;color:#3d6fd0;transform:scaleX(0.9313);transform-origin:0 0;">ZA</div>
<div class="abs" style="left:1824.95px;top:425.00px;width:1.50px;height:14.50px;background:#d0d2d8;"></div>
<svg class="abs" style="left:1842.40px;top:419.00px;" width="25" height="25" viewBox="0 0 24 24"><circle cx="6.8" cy="17.2" r="4.9" fill="none" stroke="#6b7280" stroke-width="2"/><path d="M10.3 13.7 L20.5 3.5" fill="none" stroke="#6b7280" stroke-width="2" stroke-linecap="round"/><path d="M15.2 8.8 L18 11.6 L20.6 9 L17.8 6.2" fill="none" stroke="#6b7280" stroke-width="2" stroke-linejoin="round"/></svg>
<div class="t" style="left:1877.00px;top:420.72px;font-size:21px;color:#3d6fd0;transform:scaleX(0.8286);transform-origin:0 0;">1.3K</div>
<div class="abs" style="left:1946.50px;top:397.70px;width:223.50px;height:68.30px;background:#ffffff;border:1.5px solid #d9dae3;border-radius:9px;"></div>
<svg class="abs" style="left:1969.00px;top:419.50px;" width="24.5" height="24.5" viewBox="0 0 48 48"><path fill="#EA4335" d="M24 9.5c3.54 0 6.71 1.22 9.21 3.6l6.85-6.85C35.9 2.38 30.47 0 24 0 14.62 0 6.51 5.38 2.56 13.22l7.98 6.19C12.43 13.72 17.74 9.5 24 9.5z"/><path fill="#4285F4" d="M46.98 24.55c0-1.57-.15-3.09-.38-4.55H24v9.02h12.94c-.58 2.96-2.26 5.48-4.78 7.18l7.73 6c4.51-4.18 7.09-10.36 7.09-17.65z"/><path fill="#FBBC05" d="M10.53 28.59c-.48-1.45-.76-2.99-.76-4.59s.27-3.14.76-4.59l-7.98-6.19C.92 16.46 0 20.12 0 24c0 3.88.92 7.54 2.56 10.78l7.97-6.19z"/><path fill="#34A853" d="M24 48c6.48 0 11.93-2.13 15.89-5.81l-7.73-6c-2.15 1.45-4.92 2.3-8.16 2.3-6.26 0-11.57-4.22-13.47-9.91l-7.98 6.19C6.51 42.62 14.62 48 24 48z"/></svg>
<svg class="abs" style="left:2004.00px;top:421.00px;border-radius:2px" width="31.5" height="22" viewBox="0 0 31.5 22"><rect width="31.5" height="7.333" fill="#2b2b2b" /><rect y="7.333" width="31.5" height="7.333" fill="#dd3b3b"/><rect y="14.667" width="31.5" height="7.333" fill="#f5d142"/></svg>
<div class="t" style="left:2042.00px;top:420.72px;font-size:21px;color:#3d6fd0;transform:scaleX(0.8223);transform-origin:0 0;">DE</div>
<div class="abs" style="left:2077.75px;top:425.00px;width:1.50px;height:14.50px;background:#d0d2d8;"></div>
<svg class="abs" style="left:2095.50px;top:419.00px;" width="25" height="25" viewBox="0 0 24 24"><circle cx="6.8" cy="17.2" r="4.9" fill="none" stroke="#6b7280" stroke-width="2"/><path d="M10.3 13.7 L20.5 3.5" fill="none" stroke="#6b7280" stroke-width="2" stroke-linecap="round"/><path d="M15.2 8.8 L18 11.6 L20.6 9 L17.8 6.2" fill="none" stroke="#6b7280" stroke-width="2" stroke-linejoin="round"/></svg>
<div class="t" style="left:2130.00px;top:420.72px;font-size:21px;color:#3d6fd0;transform:scaleX(0.8562);transform-origin:0 0;">37</div>
<div class="abs" style="left:2184.60px;top:398.70px;width:575.40px;height:66.00px;background:#f8f8fb;border:2.5px solid #d6d7e1;border-radius:9px;"></div>
<div class="t" style="left:2209.50px;top:422.05px;font-size:22.5px;color:#20242c;-webkit-text-stroke:0.36px #20242c;transform:scaleX(0.9283);transform-origin:0 0;">Еще</div>
<div class="t" style="left:483.00px;top:500.37px;font-size:33px;color:#1b1f29;letter-spacing:-0.908px;">Платный трафик</div>
<div class="t" style="left:738.60px;top:505.16px;font-size:18px;color:#6c7a88;-webkit-text-stroke:0.56px #6c7a88;font-style:italic;">i</div>
<div class="abs" style="left:481.70px;top:567.30px;width:2298.30px;height:653.20px;background:#ffffff;border:1.3px solid #e4e5ea;border-radius:13px;"></div>
<div class="abs" style="left:1089.00px;top:568.50px;width:1641.00px;height:154.50px;background:#f8f8fb;"></div>
<div class="abs" style="left:1089.00px;top:567.70px;width:2.00px;height:155.00px;background:#d8d9e4;"></div>
<div class="abs" style="left:1091.00px;top:722.50px;width:1639.00px;height:1.50px;background:#eeeff3;"></div>
<div class="abs" style="left:1697.50px;top:575.00px;width:1.50px;height:138.50px;background:#e0e1e7;"></div>
<div class="abs" style="left:2305.50px;top:575.00px;width:1.50px;height:138.50px;background:#e0e1e7;"></div>
<div class="t" style="left:514.50px;top:600.96px;font-size:18px;color:#3e55e8;letter-spacing:-0.229px;">ПРОГНОЗ ТРАФИКА</div>
<div class="t" style="left:694.00px;top:597.61px;font-size:17px;color:#3e55e8;-webkit-text-stroke:0.27px #3e55e8;font-style:italic;">i</div>
<div class="t" style="left:514.00px;top:639.62px;font-size:49px;color:#2438ea;-webkit-text-stroke:0.78px #2438ea;letter-spacing:0.844px;">6,563</div>
<svg class="abs" style="left:650.00px;top:659.00px;" width="11" height="10" viewBox="0 0 11 10"><path d="M5.5 0.5 L10.5 9.5 H0.5 Z" fill="#2f6b45"/></svg>
<div class="t" style="left:667.00px;top:653.52px;font-size:19px;color:#3a6b4a;-webkit-text-stroke:0.30px #3a6b4a;letter-spacing:-0.352px;">226</div>
<div class="t" style="left:1123.00px;top:600.96px;font-size:18px;color:#3a4258;letter-spacing:-0.375px;">КЛЮЧЕВЫЕ СЛОВА</div>
<div class="t" style="left:1298.50px;top:597.61px;font-size:17px;color:#3a4258;-webkit-text-stroke:0.27px #3a4258;font-style:italic;">i</div>
<div class="t" style="left:1123.00px;top:639.62px;font-size:49px;color:#344068;-webkit-text-stroke:0.78px #344068;letter-spacing:-0.556px;">1,043</div>
<svg class="abs" style="left:1254.00px;top:659.00px;" width="11" height="10" viewBox="0 0 11 10"><path d="M0.5 0.5 H10.5 L5.5 9.5 Z" fill="#d03030"/></svg>
<div class="t" style="left:1270.50px;top:653.52px;font-size:19px;color:#c83232;-webkit-text-stroke:0.30px #c83232;transform:scaleX(0.9305);transform-origin:0 0;">138</div>
<div class="t" style="left:1731.00px;top:600.96px;font-size:18px;color:#3a4258;letter-spacing:-0.098px;">СТОИМОСТЬ ТРАФИКА</div>
<div class="t" style="left:1941.00px;top:597.61px;font-size:17px;color:#3a4258;-webkit-text-stroke:0.27px #3a4258;font-style:italic;">i</div>
<div class="t" style="left:1731.00px;top:639.62px;font-size:49px;color:#344068;-webkit-text-stroke:0.78px #344068;letter-spacing:0.964px;">$4,364.4</div>
<svg class="abs" style="left:1938.50px;top:659.00px;" width="11" height="10" viewBox="0 0 11 10"><path d="M5.5 0.5 L10.5 9.5 H0.5 Z" fill="#2f6b45"/></svg>
<div class="t" style="left:1955.30px;top:653.52px;font-size:19px;color:#3a6b4a;-webkit-text-stroke:0.30px #3a6b4a;transform:scaleX(0.9254);transform-origin:0 0;">498.1</div>
<div class="t" style="left:2339.00px;top:600.96px;font-size:18px;color:#3a4258;letter-spacing:0.112px;">БЭКЛИНКИ</div>
<div class="t" style="left:2446.50px;top:597.61px;font-size:17px;color:#3a4258;-webkit-text-stroke:0.27px #3a4258;font-style:italic;">i</div>
<div class="t" style="left:2339.00px;top:639.62px;font-size:49px;color:#344068;-webkit-text-stroke:0.78px #344068;letter-spacing:1.750px;">24,490,007</div>
<div class="t" style="left:511.00px;top:759.02px;font-size:19px;color:#2a2e36;-webkit-text-stroke:0.30px #2a2e36;letter-spacing:1.994px;">6M</div>
<div class="t" style="left:559.60px;top:759.02px;font-size:19px;color:#2a2e36;-webkit-text-stroke:0.30px #2a2e36;letter-spacing:-0.584px;">12M</div>
<div class="t" style="left:615.00px;top:759.02px;font-size:19px;color:#2a2e36;-webkit-text-stroke:0.30px #2a2e36;letter-spacing:0.016px;">18M</div>
<div class="t" style="left:671.70px;top:759.02px;font-size:19px;color:#2a2e36;-webkit-text-stroke:0.30px #2a2e36;letter-spacing:0.966px;">24M</div>
<div class="t" style="left:730.80px;top:759.02px;font-size:19px;color:#2a2e36;-webkit-text-stroke:0.30px #2a2e36;letter-spacing:1.466px;">30M</div>
<div class="t" style="left:791.00px;top:759.02px;font-size:19px;color:#2a2e36;-webkit-text-stroke:0.30px #2a2e36;letter-spacing:1.216px;">36M</div>
<div class="t" style="left:850.70px;top:759.02px;font-size:19px;color:#2a2e36;-webkit-text-stroke:0.30px #2a2e36;letter-spacing:-0.825px;">Все</div>
<div class="abs" style="left:556.00px;top:784.50px;width:43.00px;height:2.50px;background:#3b5cf0;border-radius:1px;"></div>
<div class="abs" style="left:2613.00px;top:753.60px;width:43.00px;height:24.00px;background:#4169ef;border-radius:12px;"></div>
<div class="abs" style="left:2634.50px;top:756.40px;width:19.00px;height:18.40px;background:#ffffff;border-radius:10px;"></div>
<div class="t" style="left:2670.00px;top:755.33px;font-size:23px;color:#22262e;">Показать</div>
<div class="abs" style="left:589.00px;top:825.50px;width:2141.00px;height:2.00px;background:#e7e7eb;"></div>
<div class="abs" style="left:589.00px;top:905.70px;width:2141.00px;height:2.00px;background:#e7e7eb;"></div>
<div class="abs" style="left:589.00px;top:985.90px;width:2141.00px;height:2.00px;background:#e7e7eb;"></div>
<div class="abs" style="left:589.00px;top:1066.00px;width:2141.00px;height:2.00px;background:#d3dbec;"></div>
<div class="t" style="left:524.60px;top:818.67px;font-size:20px;color:#6c7a88;transform:scaleX(0.9268);transform-origin:0 0;">150k</div>
<div class="t" style="left:523.00px;top:898.87px;font-size:20px;color:#6c7a88;letter-spacing:-0.525px;">100k</div>
<div class="t" style="left:533.00px;top:979.07px;font-size:20px;color:#6c7a88;letter-spacing:-0.225px;">50k</div>
<div class="abs" style="left:610.25px;top:1067.00px;width:1.50px;height:9.00px;background:#d3dbec;"></div>
<div class="t" style="left:570.35px;top:1082.54px;font-size:18.5px;color:#6c7a88;letter-spacing:0.583px;">Дек 2024</div>
<div class="abs" style="left:800.25px;top:1067.00px;width:1.50px;height:9.00px;background:#d3dbec;"></div>
<div class="t" style="left:761.40px;top:1082.54px;font-size:18.5px;color:#6c7a88;letter-spacing:-0.072px;">Янв 2025</div>
<div class="abs" style="left:991.25px;top:1067.00px;width:1.50px;height:9.00px;background:#d3dbec;"></div>
<div class="t" style="left:952.00px;top:1082.54px;font-size:18.5px;color:#6c7a88;letter-spacing:-0.069px;">Фев 2025</div>
<div class="abs" style="left:1162.25px;top:1067.00px;width:1.50px;height:9.00px;background:#d3dbec;"></div>
<div class="t" style="left:1121.50px;top:1082.54px;font-size:18.5px;color:#6c7a88;letter-spacing:0.071px;">Мар 2025</div>
<div class="abs" style="left:1352.75px;top:1067.00px;width:1.50px;height:9.00px;background:#d3dbec;"></div>
<div class="t" style="left:1313.00px;top:1082.54px;font-size:18.5px;color:#6c7a88;letter-spacing:0.292px;">Апр 2025</div>
<div class="abs" style="left:1536.95px;top:1067.00px;width:1.50px;height:9.00px;background:#d3dbec;"></div>
<div class="t" style="left:1495.55px;top:1082.54px;font-size:18.5px;color:#6c7a88;letter-spacing:0.250px;">Май 2025</div>
<div class="abs" style="left:1727.25px;top:1067.00px;width:1.50px;height:9.00px;background:#d3dbec;"></div>
<div class="t" style="left:1685.00px;top:1082.54px;font-size:18.5px;color:#6c7a88;letter-spacing:0.330px;">Июн 2025</div>
<div class="abs" style="left:1911.25px;top:1067.00px;width:1.50px;height:9.00px;background:#d3dbec;"></div>
<div class="t" style="left:1868.50px;top:1082.54px;font-size:18.5px;color:#6c7a88;letter-spacing:0.449px;">Июл 2025</div>
<div class="abs" style="left:2101.25px;top:1067.00px;width:1.50px;height:9.00px;background:#d3dbec;"></div>
<div class="t" style="left:2062.00px;top:1082.54px;font-size:18.5px;color:#6c7a88;letter-spacing:0.683px;">Авг 2025</div>
<div class="abs" style="left:2290.95px;top:1067.00px;width:1.50px;height:9.00px;background:#d3dbec;"></div>
<div class="t" style="left:2251.70px;top:1082.54px;font-size:18.5px;color:#6c7a88;letter-spacing:-0.025px;">Сен 2025</div>
<div class="abs" style="left:2475.25px;top:1067.00px;width:1.50px;height:9.00px;background:#d3dbec;"></div>
<div class="t" style="left:2435.50px;top:1082.54px;font-size:18.5px;color:#6c7a88;letter-spacing:0.504px;">Окт 2025</div>
<div class="abs" style="left:2665.25px;top:1067.00px;width:1.50px;height:9.00px;background:#d3dbec;"></div>
<div class="t" style="left:2625.50px;top:1082.54px;font-size:18.5px;color:#6c7a88;letter-spacing:0.147px;">Ноя 2025</div>
<svg class="abs" style="left:0.00px;top:0.00px;overflow:hidden" width="2730" height="1547" viewBox="0 0 2730 1547"><path d="M611 1044 C611.00 1044.00 725.00 1052.70 801 1052.7 C877.40 1052.70 915.60 1052.00 992 1052 C1060.40 1052.00 1094.60 1063.00 1163 1063 C1239.20 1063.00 1277.30 1047.60 1353.5 1045.8 C1427.18 1044.00 1464.02 1045.80 1537.7 1044 C1613.82 1042.20 1651.88 1044.00 1728 1028.6 C1801.60 1013.20 1838.40 902.00 1912 902 C1988.00 902.00 2026.00 1057.00 2102 1057 C2177.88 1057.00 2215.82 1010.00 2291.7 1010 C2365.42 1010.00 2402.28 1053.50 2476 1055 C2552.00 1056.50 2590.00 1056.09 2666 1056.5 C2739.60 1056.89 2850.00 1057.00 2850 1057" fill="none" stroke="#3572d2" stroke-width="3.2"/><circle cx="611" cy="1044" r="6.6" fill="#3572d2"/><circle cx="801" cy="1052.7" r="6.6" fill="#3572d2"/><circle cx="992" cy="1052" r="6.6" fill="#3572d2"/><circle cx="1163" cy="1063" r="6.6" fill="#3572d2"/><circle cx="1353.5" cy="1045.8" r="6.6" fill="#3572d2"/><circle cx="1537.7" cy="1044" r="6.6" fill="#3572d2"/><circle cx="1728" cy="1028.6" r="6.6" fill="#3572d2"/><circle cx="1912" cy="902" r="6.6" fill="#3572d2"/><circle cx="2102" cy="1057" r="6.6" fill="#3572d2"/><circle cx="2291.7" cy="1010" r="6.6" fill="#3572d2"/><circle cx="2476" cy="1055" r="6.6" fill="#3572d2"/><circle cx="2666" cy="1056.5" r="6.6" fill="#3572d2"/><circle cx="2850" cy="1057" r="6.6" fill="#3572d2"/></svg>
<div class="abs" style="left:599.50px;top:1056.00px;width:23.00px;height:23.00px;background:#ffffff;border-radius:12px;"></div>
<svg class="abs" style="left:601.00px;top:1057.00px;" width="20" height="20" viewBox="0 0 48 48"><path fill="#EA4335" d="M24 9.5c3.54 0 6.71 1.22 9.21 3.6l6.85-6.85C35.9 2.38 30.47 0 24 0 14.62 0 6.51 5.38 2.56 13.22l7.98 6.19C12.43 13.72 17.74 9.5 24 9.5z"/><path fill="#4285F4" d="M46.98 24.55c0-1.57-.15-3.09-.38-4.55H24v9.02h12.94c-.58 2.96-2.26 5.48-4.78 7.18l7.73 6c4.51-4.18 7.09-10.36 7.09-17.65z"/><path fill="#FBBC05" d="M10.53 28.59c-.48-1.45-.76-2.99-.76-4.59s.27-3.14.76-4.59l-7.98-6.19C.92 16.46 0 20.12 0 24c0 3.88.92 7.54 2.56 10.78l7.97-6.19z"/><path fill="#34A853" d="M24 48c6.48 0 11.93-2.13 15.89-5.81l-7.73-6c-2.15 1.45-4.92 2.3-8.16 2.3-6.26 0-11.57-4.22-13.47-9.91l-7.98 6.19C6.51 42.62 14.62 48 24 48z"/></svg>
<div class="abs" style="left:1151.50px;top:1056.00px;width:23.00px;height:23.00px;background:#ffffff;border-radius:12px;"></div>
<svg class="abs" style="left:1153.00px;top:1057.00px;" width="20" height="20" viewBox="0 0 48 48"><path fill="#EA4335" d="M24 9.5c3.54 0 6.71 1.22 9.21 3.6l6.85-6.85C35.9 2.38 30.47 0 24 0 14.62 0 6.51 5.38 2.56 13.22l7.98 6.19C12.43 13.72 17.74 9.5 24 9.5z"/><path fill="#4285F4" d="M46.98 24.55c0-1.57-.15-3.09-.38-4.55H24v9.02h12.94c-.58 2.96-2.26 5.48-4.78 7.18l7.73 6c4.51-4.18 7.09-10.36 7.09-17.65z"/><path fill="#FBBC05" d="M10.53 28.59c-.48-1.45-.76-2.99-.76-4.59s.27-3.14.76-4.59l-7.98-6.19C.92 16.46 0 20.12 0 24c0 3.88.92 7.54 2.56 10.78l7.97-6.19z"/><path fill="#34A853" d="M24 48c6.48 0 11.93-2.13 15.89-5.81l-7.73-6c-2.15 1.45-4.92 2.3-8.16 2.3-6.26 0-11.57-4.22-13.47-9.91l-7.98 6.19C6.51 42.62 14.62 48 24 48z"/></svg>
<div class="abs" style="left:1716.50px;top:1056.00px;width:23.00px;height:23.00px;background:#ffffff;border-radius:12px;"></div>
<svg class="abs" style="left:1718.00px;top:1057.00px;" width="20" height="20" viewBox="0 0 48 48"><path fill="#EA4335" d="M24 9.5c3.54 0 6.71 1.22 9.21 3.6l6.85-6.85C35.9 2.38 30.47 0 24 0 14.62 0 6.51 5.38 2.56 13.22l7.98 6.19C12.43 13.72 17.74 9.5 24 9.5z"/><path fill="#4285F4" d="M46.98 24.55c0-1.57-.15-3.09-.38-4.55H24v9.02h12.94c-.58 2.96-2.26 5.48-4.78 7.18l7.73 6c4.51-4.18 7.09-10.36 7.09-17.65z"/><path fill="#FBBC05" d="M10.53 28.59c-.48-1.45-.76-2.99-.76-4.59s.27-3.14.76-4.59l-7.98-6.19C.92 16.46 0 20.12 0 24c0 3.88.92 7.54 2.56 10.78l7.97-6.19z"/><path fill="#34A853" d="M24 48c6.48 0 11.93-2.13 15.89-5.81l-7.73-6c-2.15 1.45-4.92 2.3-8.16 2.3-6.26 0-11.57-4.22-13.47-9.91l-7.98 6.19C6.51 42.62 14.62 48 24 48z"/></svg>
<div class="abs" style="left:2090.50px;top:1056.00px;width:23.00px;height:23.00px;background:#ffffff;border-radius:12px;"></div>
<svg class="abs" style="left:2092.00px;top:1057.00px;" width="20" height="20" viewBox="0 0 48 48"><path fill="#EA4335" d="M24 9.5c3.54 0 6.71 1.22 9.21 3.6l6.85-6.85C35.9 2.38 30.47 0 24 0 14.62 0 6.51 5.38 2.56 13.22l7.98 6.19C12.43 13.72 17.74 9.5 24 9.5z"/><path fill="#4285F4" d="M46.98 24.55c0-1.57-.15-3.09-.38-4.55H24v9.02h12.94c-.58 2.96-2.26 5.48-4.78 7.18l7.73 6c4.51-4.18 7.09-10.36 7.09-17.65z"/><path fill="#FBBC05" d="M10.53 28.59c-.48-1.45-.76-2.99-.76-4.59s.27-3.14.76-4.59l-7.98-6.19C.92 16.46 0 20.12 0 24c0 3.88.92 7.54 2.56 10.78l7.97-6.19z"/><path fill="#34A853" d="M24 48c6.48 0 11.93-2.13 15.89-5.81l-7.73-6c-2.15 1.45-4.92 2.3-8.16 2.3-6.26 0-11.57-4.22-13.47-9.91l-7.98 6.19C6.51 42.62 14.62 48 24 48z"/></svg>
<svg class="abs" style="left:789.00px;top:1055.00px;" width="24" height="24" viewBox="0 0 24 24"><g fill="#2a2d33" stroke="#ffffff" stroke-width="1.4"><ellipse cx="12" cy="17.5" rx="9" ry="4"/><ellipse cx="12" cy="12.5" rx="9" ry="4"/><ellipse cx="12" cy="7.5" rx="9" ry="4"/></g></svg>
<div class="abs" style="left:481.70px;top:1251.60px;width:2298.30px;height:348.40px;background:#ffffff;border:1.3px solid #e4e5ea;border-radius:13px;"></div>
<div class="abs" style="left:483.00px;top:1321.20px;width:2247.00px;height:1.30px;background:#e3e4eb;"></div>
<div class="t" style="left:508.30px;top:1277.09px;font-size:24.7px;color:#20242c;-webkit-text-stroke:0.77px #20242c;transform:scaleX(0.7122);transform-origin:0 0;">1,141</div>
<div class="t" style="left:561.50px;top:1278.67px;font-size:20px;color:#8a9098;font-family:'Liberation Mono';">i</div>
<div class="abs" style="left:2170.00px;top:1265.50px;width:74.60px;height:43.00px;background:#ffffff;border:1.5px solid #d2d3dd;border-radius:7px;"></div>
<svg class="abs" style="left:2179.00px;top:1273.00px;" width="26" height="28" viewBox="0 0 26 28"><rect x="7" y="7" width="13" height="18" rx="2" fill="none" stroke="#22262e" stroke-width="2.3"/><path d="M3 20 V5 Q3 3 5 3 H15" fill="none" stroke="#22262e" stroke-width="2.3" stroke-linecap="round"/></svg>
<svg class="abs" style="left:2215.70px;top:1279.70px;" width="16.1" height="11.1" viewBox="0 0 16.1 11.1"><path d="M2.3 2.3 L8.05 8.8 L13.8 2.3" fill="none" stroke="#22262e" stroke-width="2.3" stroke-linecap="round" stroke-linejoin="round"/></svg>
<div class="abs" style="left:2257.60px;top:1265.50px;width:173.70px;height:43.00px;background:#ffffff;border:1.5px solid #d2d3dd;border-radius:7px;"></div>
<svg class="abs" style="left:2270.50px;top:1280.00px;" width="18.5" height="13.5" viewBox="0 0 18.5 13.5"><rect x="0" y="0" width="3.6" height="13.5" fill="#22262e"/><rect x="5" y="0" width="3.6" height="13.5" fill="#22262e"/><rect x="10" y="0" width="3.6" height="13.5" fill="#22262e"/><rect x="15" y="0" width="3.5" height="13.5" fill="#22262e"/></svg>
<div class="t" style="left:2302.00px;top:1277.55px;font-size:22.5px;color:#2a2e36;letter-spacing:-0.143px;">Колонки</div>
<svg class="abs" style="left:2401.70px;top:1279.70px;" width="16.400000000000183" height="11.1" viewBox="0 0 16.400000000000183 11.1"><path d="M2.3 2.3 L8.200000000000092 8.8 L14.100000000000183 2.3" fill="none" stroke="#22262e" stroke-width="2.3" stroke-linecap="round" stroke-linejoin="round"/></svg>
<div class="abs" style="left:2444.00px;top:1265.50px;width:336.00px;height:43.00px;background:#ffffff;border:1.5px solid #d2d3dd;border-radius:7px;"></div>
<svg class="abs" style="left:2456.00px;top:1279.00px;" width="18" height="17" viewBox="0 0 18 17"><path d="M1 5.5 V1 H5.5 M12.5 1 H17 V5.5 M17 11.5 V16 H12.5 M5.5 16 H1 V11.5" fill="none" stroke="#22262e" stroke-width="2.3"/></svg>
<div class="t" style="left:2488.50px;top:1277.55px;font-size:22.5px;color:#2a2e36;letter-spacing:-0.659px;">Развернуть объявления</div>
<div class="abs" style="left:507.30px;top:1336.50px;width:314.30px;height:42.00px;background:#f8f8fb;border:1.5px solid #d2d3dd;border-radius:7px;"></div>
<svg class="abs" style="left:519.00px;top:1348.00px;" width="22" height="22" viewBox="0 0 22 22"><circle cx="8.3" cy="8.3" r="6" fill="none" stroke="#5f646c" stroke-width="2.6"/><path d="M12.8 12.8 L19 19" stroke="#5f646c" stroke-width="3" stroke-linecap="round"/></svg>
<div class="t" style="left:552.40px;top:1348.18px;font-size:22px;color:#8d929a;letter-spacing:0.308px;">Поиск</div>
<div class="abs" style="left:848.40px;top:1336.50px;width:153.40px;height:42.00px;background:#ffffff;border:1.5px solid #d2d3dd;border-radius:7px;"></div>
<div class="t" style="left:860.60px;top:1348.08px;font-size:22px;color:#353940;-webkit-text-stroke:0.35px #353940;letter-spacing:-0.086px;">Включить</div>
<svg class="abs" style="left:972.90px;top:1351.40px;" width="15.7" height="10.7" viewBox="0 0 15.7 10.7"><path d="M2.1 2.1 L7.85 8.6 L13.6 2.1" fill="none" stroke="#2a2e36" stroke-width="2.1" stroke-linecap="round" stroke-linejoin="round"/></svg>
<div class="abs" style="left:1015.60px;top:1336.50px;width:166.40px;height:42.00px;background:#ffffff;border:1.5px solid #d2d3dd;border-radius:7px;"></div>
<div class="t" style="left:1028.00px;top:1348.08px;font-size:22px;color:#353940;-webkit-text-stroke:0.35px #353940;letter-spacing:0.109px;">Исключить</div>
<svg class="abs" style="left:1152.30px;top:1351.40px;" width="15.7" height="10.7" viewBox="0 0 15.7 10.7"><path d="M2.1 2.1 L7.85 8.6 L13.6 2.1" fill="none" stroke="#2a2e36" stroke-width="2.1" stroke-linecap="round" stroke-linejoin="round"/></svg>
<div class="abs" style="left:1196.60px;top:1336.50px;width:108.40px;height:42.00px;background:#ffffff;border:1.5px solid #d2d3dd;border-radius:7px;"></div>
<div class="t" style="left:1208.70px;top:1348.08px;font-size:22px;color:#353940;-webkit-text-stroke:0.35px #353940;transform:scaleX(0.9292);transform-origin:0 0;">URL</div>
<svg class="abs" style="left:1276.90px;top:1351.40px;" width="15.7" height="10.7" viewBox="0 0 15.7 10.7"><path d="M2.1 2.1 L7.85 8.6 L13.6 2.1" fill="none" stroke="#2a2e36" stroke-width="2.1" stroke-linecap="round" stroke-linejoin="round"/></svg>
<div class="abs" style="left:1318.80px;top:1336.50px;width:222.70px;height:42.00px;background:#ffffff;border:1.5px solid #d2d3dd;border-radius:7px;"></div>
<div class="t" style="left:1331.60px;top:1348.08px;font-size:22px;color:#353940;-webkit-text-stroke:0.35px #353940;letter-spacing:-0.455px;">Количество слов</div>
<svg class="abs" style="left:1512.90px;top:1351.40px;" width="15.7" height="10.7" viewBox="0 0 15.7 10.7"><path d="M2.1 2.1 L7.85 8.6 L13.6 2.1" fill="none" stroke="#2a2e36" stroke-width="2.1" stroke-linecap="round" stroke-linejoin="round"/></svg>
<div class="abs" style="left:1554.00px;top:1336.50px;width:274.00px;height:42.00px;background:#ffffff;border:1.5px solid #d2d3dd;border-radius:7px;"></div>
<div class="t" style="left:1567.70px;top:1348.08px;font-size:22px;color:#353940;-webkit-text-stroke:0.35px #353940;letter-spacing:-0.293px;">Количество символов</div>
<svg class="abs" style="left:1799.90px;top:1351.40px;" width="15.7" height="10.7" viewBox="0 0 15.7 10.7"><path d="M2.1 2.1 L7.85 8.6 L13.6 2.1" fill="none" stroke="#2a2e36" stroke-width="2.1" stroke-linecap="round" stroke-linejoin="round"/></svg>
<div class="abs" style="left:1842.00px;top:1336.50px;width:167.00px;height:42.00px;background:#ffffff;border:1.5px solid #d2d3dd;border-radius:7px;"></div>
<div class="t" style="left:1854.80px;top:1348.08px;font-size:22px;color:#353940;-webkit-text-stroke:0.35px #353940;letter-spacing:-0.176px;">Сложность</div>
<svg class="abs" style="left:1980.30px;top:1351.40px;" width="15.7" height="10.7" viewBox="0 0 15.7 10.7"><path d="M2.1 2.1 L7.85 8.6 L13.6 2.1" fill="none" stroke="#2a2e36" stroke-width="2.1" stroke-linecap="round" stroke-linejoin="round"/></svg>
<div class="abs" style="left:2023.00px;top:1336.50px;width:141.00px;height:42.00px;background:#ffffff;border:1.5px solid #d2d3dd;border-radius:7px;"></div>
<div class="t" style="left:2035.70px;top:1348.08px;font-size:22px;color:#353940;-webkit-text-stroke:0.35px #353940;letter-spacing:-0.281px;">Позиция</div>
<svg class="abs" style="left:2136.30px;top:1351.40px;" width="15.7" height="10.7" viewBox="0 0 15.7 10.7"><path d="M2.1 2.1 L7.85 8.6 L13.6 2.1" fill="none" stroke="#2a2e36" stroke-width="2.1" stroke-linecap="round" stroke-linejoin="round"/></svg>
<div class="abs" style="left:2178.40px;top:1336.50px;width:179.30px;height:42.00px;background:#ffffff;border:1.5px solid #d2d3dd;border-radius:7px;"></div>
<div class="t" style="left:2190.00px;top:1348.08px;font-size:22px;color:#353940;-webkit-text-stroke:0.35px #353940;letter-spacing:-0.248px;">Частотность</div>
<svg class="abs" style="left:2327.90px;top:1351.40px;" width="15.7" height="10.7" viewBox="0 0 15.7 10.7"><path d="M2.1 2.1 L7.85 8.6 L13.6 2.1" fill="none" stroke="#2a2e36" stroke-width="2.1" stroke-linecap="round" stroke-linejoin="round"/></svg>
<div class="abs" style="left:2411.00px;top:1336.50px;width:228.00px;height:42.00px;background:#4468ef;border-radius:7px;"></div>
<div class="t" style="left:2424.00px;top:1348.18px;font-size:22px;color:#ffffff;-webkit-text-stroke:0.68px #ffffff;letter-spacing:-0.294px;">Использовать слова</div>
<div class="abs" style="left:2652.60px;top:1336.50px;width:127.40px;height:42.00px;background:#ffffff;border:1.5px solid #d2d3dd;border-radius:7px;"></div>
<div class="t" style="left:2664.90px;top:1348.18px;font-size:22px;color:#2a2e36;letter-spacing:1.199px;">Набор</div>
<div class="abs" style="left:507.30px;top:1392.30px;width:210.20px;height:42.90px;background:#ffffff;border:1.5px solid #d2d3dd;border-radius:7px;"></div>
<div class="t" style="left:520.50px;top:1403.88px;font-size:22px;color:#353940;-webkit-text-stroke:0.35px #353940;letter-spacing:-0.501px;">Интент запроса</div>
<svg class="abs" style="left:688.30px;top:1407.20px;" width="15.7" height="10.7" viewBox="0 0 15.7 10.7"><path d="M2.1 2.1 L7.85 8.6 L13.6 2.1" fill="none" stroke="#2a2e36" stroke-width="2.1" stroke-linecap="round" stroke-linejoin="round"/></svg>
<div class="abs" style="left:731.50px;top:1392.30px;width:171.50px;height:42.90px;background:#ffffff;border:1.5px solid #d2d3dd;border-radius:7px;"></div>
<div class="t" style="left:744.00px;top:1403.88px;font-size:22px;color:#353940;-webkit-text-stroke:0.35px #353940;letter-spacing:-0.096px;">Положение</div>
<svg class="abs" style="left:872.90px;top:1407.20px;" width="15.7" height="10.7" viewBox="0 0 15.7 10.7"><path d="M2.1 2.1 L7.85 8.6 L13.6 2.1" fill="none" stroke="#2a2e36" stroke-width="2.1" stroke-linecap="round" stroke-linejoin="round"/></svg>
<div class="abs" style="left:915.00px;top:1392.30px;width:110.00px;height:42.90px;background:#ffffff;border:1.5px solid #d2d3dd;border-radius:7px;"></div>
<div class="t" style="left:928.20px;top:1403.88px;font-size:22px;color:#353940;-webkit-text-stroke:0.35px #353940;transform:scaleX(0.8998);transform-origin:0 0;">CPC</div>
<svg class="abs" style="left:996.50px;top:1407.20px;" width="15.7" height="10.7" viewBox="0 0 15.7 10.7"><path d="M2.1 2.1 L7.85 8.6 L13.6 2.1" fill="none" stroke="#2a2e36" stroke-width="2.1" stroke-linecap="round" stroke-linejoin="round"/></svg>
<div class="abs" style="left:1039.00px;top:1392.30px;width:186.00px;height:42.90px;background:#ffffff;border:1.5px solid #d2d3dd;border-radius:7px;"></div>
<div class="t" style="left:1051.50px;top:1403.88px;font-size:22px;color:#353940;-webkit-text-stroke:0.35px #353940;letter-spacing:-0.055px;">Конкуренция</div>
<svg class="abs" style="left:1196.90px;top:1407.20px;" width="15.7" height="10.7" viewBox="0 0 15.7 10.7"><path d="M2.1 2.1 L7.85 8.6 L13.6 2.1" fill="none" stroke="#2a2e36" stroke-width="2.1" stroke-linecap="round" stroke-linejoin="round"/></svg>
<div class="abs" style="left:1239.70px;top:1392.30px;width:130.80px;height:42.90px;background:#ffffff;border:1.5px solid #d2d3dd;border-radius:7px;"></div>
<div class="t" style="left:1252.70px;top:1403.88px;font-size:22px;color:#353940;-webkit-text-stroke:0.35px #353940;letter-spacing:-0.661px;">Трафик</div>
<svg class="abs" style="left:1340.60px;top:1407.20px;" width="15.7" height="10.7" viewBox="0 0 15.7 10.7"><path d="M2.1 2.1 L7.85 8.6 L13.6 2.1" fill="none" stroke="#2a2e36" stroke-width="2.1" stroke-linecap="round" stroke-linejoin="round"/></svg>
<div class="abs" style="left:1383.00px;top:1392.30px;width:197.40px;height:42.90px;background:#ffffff;border:1.5px solid #d2d3dd;border-radius:7px;"></div>
<div class="t" style="left:1396.00px;top:1403.88px;font-size:22px;color:#353940;-webkit-text-stroke:0.35px #353940;letter-spacing:-0.477px;">Доля трафика</div>
<svg class="abs" style="left:1550.60px;top:1407.20px;" width="15.7" height="10.7" viewBox="0 0 15.7 10.7"><path d="M2.1 2.1 L7.85 8.6 L13.6 2.1" fill="none" stroke="#2a2e36" stroke-width="2.1" stroke-linecap="round" stroke-linejoin="round"/></svg>
<div class="abs" style="left:1592.60px;top:1392.30px;width:163.40px;height:42.90px;background:#ffffff;border:1.5px solid #d2d3dd;border-radius:7px;"></div>
<div class="t" style="left:1606.00px;top:1403.88px;font-size:22px;color:#353940;-webkit-text-stroke:0.35px #353940;letter-spacing:-0.393px;">Стоимость</div>
<svg class="abs" style="left:1727.40px;top:1407.20px;" width="15.7" height="10.7" viewBox="0 0 15.7 10.7"><path d="M2.1 2.1 L7.85 8.6 L13.6 2.1" fill="none" stroke="#2a2e36" stroke-width="2.1" stroke-linecap="round" stroke-linejoin="round"/></svg>
<svg class="abs" style="left:1782.00px;top:1403.00px;" width="20" height="20" viewBox="0 0 20 20"><path d="M10 2 V18 M2 10 H18" stroke="#22262e" stroke-width="2.4" stroke-linecap="round"/></svg>
<div class="t" style="left:1813.40px;top:1403.78px;font-size:22px;color:#33373e;-webkit-text-stroke:0.68px #33373e;letter-spacing:0.539px;">Фильтр</div>
<div class="abs" style="left:483.00px;top:1449.70px;width:2247.00px;height:83.30px;background:#f8f9fb;"></div>
<div class="abs" style="left:1174.20px;top:1449.70px;width:3.00px;height:83.30px;background:#eff0f4;"></div>
<div class="abs" style="left:1387.50px;top:1449.70px;width:3.00px;height:83.30px;background:#eff0f4;"></div>
<div class="abs" style="left:1544.50px;top:1449.70px;width:3.00px;height:83.30px;background:#eff0f4;"></div>
<div class="abs" style="left:1756.00px;top:1449.70px;width:3.00px;height:83.30px;background:#eff0f4;"></div>
<div class="abs" style="left:1968.90px;top:1449.70px;width:3.00px;height:83.30px;background:#eff0f4;"></div>
<div class="abs" style="left:2179.50px;top:1449.70px;width:3.00px;height:83.30px;background:#eff0f4;"></div>
<div class="abs" style="left:2339.00px;top:1449.70px;width:3.00px;height:83.30px;background:#eff0f4;"></div>
<div class="abs" style="left:2551.50px;top:1449.70px;width:3.00px;height:83.30px;background:#eff0f4;"></div>
<div class="abs" style="left:483.00px;top:1533.00px;width:2247.00px;height:14.00px;background:#f1f2f6;"></div>
<div class="abs" style="left:515.00px;top:1544.50px;width:1766.00px;height:5.50px;background:#d4d6df;border-radius:3px;"></div>
<div class="abs" style="left:515.00px;top:1480.00px;width:23.40px;height:22.70px;background:#f8f9fb;border:2.8px solid #2a2d33;border-radius:4px;"></div>
<div class="t" style="left:558.70px;top:1483.04px;font-size:18.5px;color:#5c6b77;-webkit-text-stroke:0.57px #5c6b77;letter-spacing:0.026px;">КЛЮЧЕВОЕ СЛОВО</div>
<div class="t" style="left:742.50px;top:1483.04px;font-size:18.5px;color:#5c6b77;-webkit-text-stroke:0.57px #5c6b77;transform:scaleX(0.8870);transform-origin:0 0;">(1,141)</div>
<div class="t" style="left:1220.00px;top:1482.54px;font-size:18.5px;color:#5c6b77;-webkit-text-stroke:0.57px #5c6b77;letter-spacing:0.139px;">СЛОЖНОСТЬ</div>
<div class="t" style="left:1420.00px;top:1482.54px;font-size:18.5px;color:#5c6b77;-webkit-text-stroke:0.57px #5c6b77;letter-spacing:-0.417px;">ПОЗИЦИЯ</div>
<div class="t" style="left:1588.00px;top:1482.54px;font-size:18.5px;color:#5c6b77;-webkit-text-stroke:0.57px #5c6b77;letter-spacing:-0.111px;">ЧАСТОТНОСТЬ</div>
<div class="t" style="left:1776.70px;top:1471.44px;font-size:18.5px;color:#5c6b77;-webkit-text-stroke:0.57px #5c6b77;letter-spacing:-0.454px;">ИНТЕНТ</div>
<div class="t" style="left:1776.70px;top:1495.74px;font-size:18.5px;color:#5c6b77;-webkit-text-stroke:0.57px #5c6b77;letter-spacing:-0.370px;">ЗАПРОСА</div>
<div class="t" style="left:2014.70px;top:1482.54px;font-size:18.5px;color:#5c6b77;-webkit-text-stroke:0.57px #5c6b77;letter-spacing:-0.129px;">ПОЛОЖЕНИЕ</div>
<div class="t" style="left:2271.00px;top:1482.54px;font-size:18.5px;color:#5c6b77;-webkit-text-stroke:0.57px #5c6b77;transform:scaleX(0.9216);transform-origin:0 0;">CPC</div>
<div class="t" style="left:2380.00px;top:1482.54px;font-size:18.5px;color:#5c6b77;-webkit-text-stroke:0.57px #5c6b77;letter-spacing:-0.044px;">КОНКУРЕНЦИЯ</div>
<div class="t" style="left:2571.80px;top:1482.54px;font-size:18.5px;color:#5c6b77;-webkit-text-stroke:0.57px #5c6b77;transform:scaleX(0.9185);transform-origin:0 0;">URL</div>
<div class="abs" style="left:1585.00px;top:224.00px;width:204.00px;height:78.00px;border:8px solid #f0aab8;border-radius:28px;background:transparent;"></div>
<div class="abs" style="left:1593.00px;top:232.00px;width:188.00px;height:62.00px;border:8px solid #d4173a;border-radius:20px;background:transparent;"></div>
<svg class="abs" style="left:1700.00px;top:100.00px;" width="230" height="150" viewBox="0 0 230 150"><path d="M94 116 L108 79 L134 107 Z" fill="#f6d2da" stroke="#f6d2da" stroke-width="18" stroke-linejoin="round"/><path d="M198 27 L118 94" stroke="#d4173a" stroke-width="7.5" stroke-linecap="round"/><path d="M94 116 L108 79 L134 107 Z" fill="#d4173a" stroke="#d4173a" stroke-width="4" stroke-linejoin="round"/></svg>
</body></html>
